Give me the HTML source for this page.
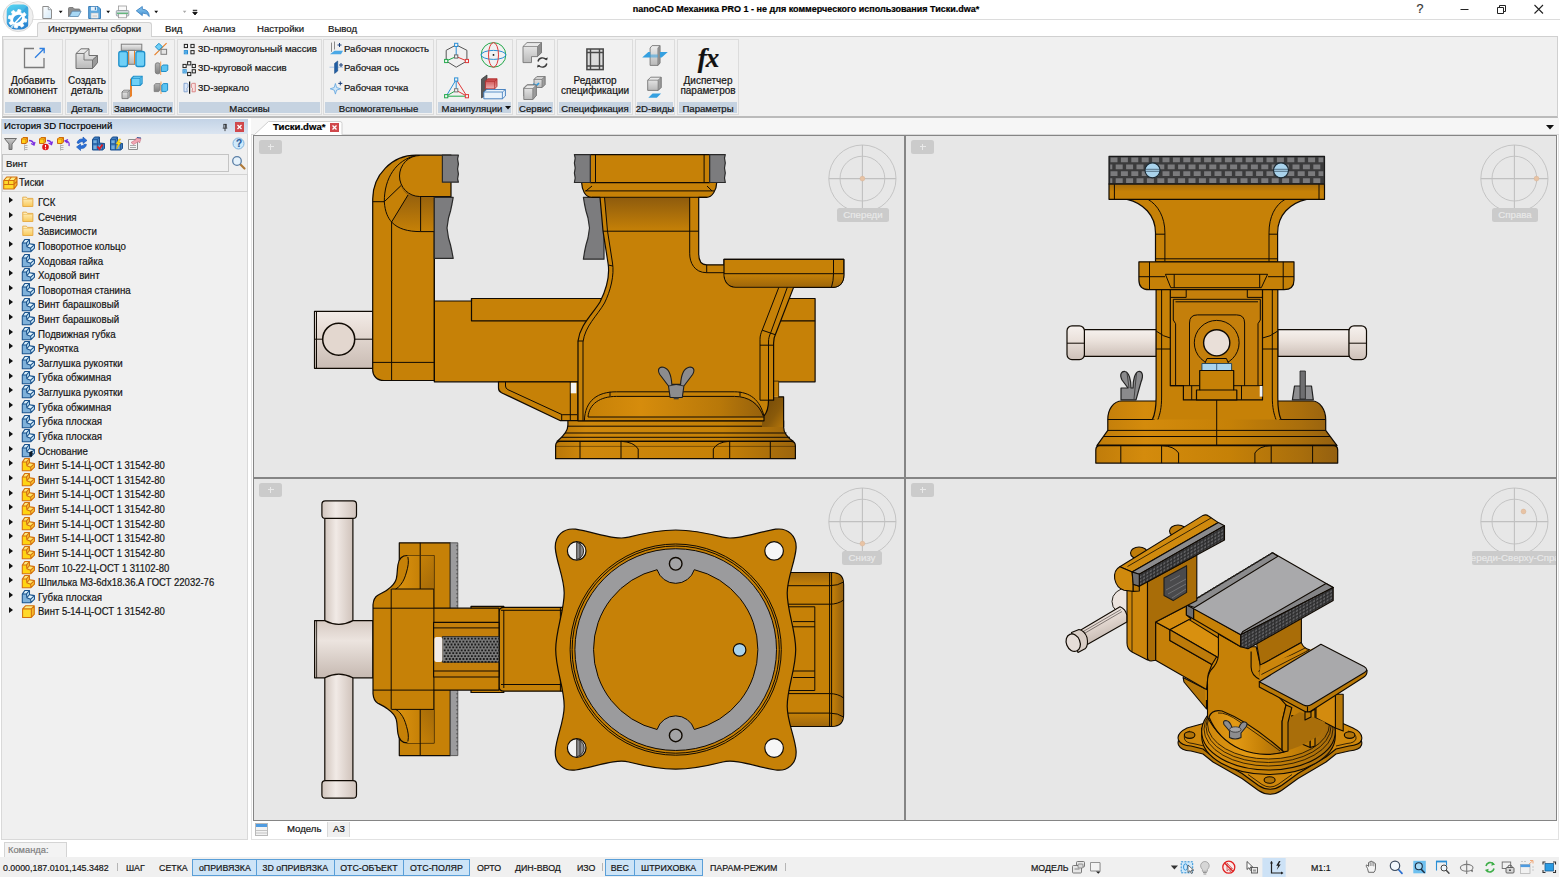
<!DOCTYPE html>
<html lang="ru">
<head>
<meta charset="utf-8">
<title>nanoCAD Механика PRO 1 - Тиски.dwa</title>
<style>
*{box-sizing:border-box;margin:0;padding:0}
html,body{width:1560px;height:877px;overflow:hidden;background:#fff}
body{position:relative;font-family:"Liberation Sans",sans-serif;font-size:9.6px;color:#151515;line-height:12px;-webkit-text-stroke:.2px}
.a{position:absolute}
.t{position:absolute;white-space:nowrap}
.tc{position:absolute;white-space:nowrap;text-align:center}
svg{position:absolute;overflow:visible}
#ribbon{left:2px;top:36px;width:1556px;height:81.5px;background:#f0f0f0;border:1px solid #d0d0d0;border-bottom:2px solid #bbbbbb}
.grp{position:absolute;top:39px;height:76px;border:1px solid #dcdcdc;background:#f1f1f1}
.grp .lab{position:absolute;left:1px;right:1px;bottom:1px;height:11px;background:#c6d3e1}
.gl{position:absolute;top:103px;height:12px;text-align:center;white-space:nowrap}
.gl span{display:inline-block}
#side{left:1px;top:119px;width:247px;height:721px;background:#f0f0f0;border:1px solid #d9d9d9}
.row{position:absolute;left:38px;white-space:nowrap;font-size:10.5px;transform:scaleX(.925);transform-origin:0 0}
.arr{position:absolute;left:9px;width:0;height:0;border-left:4.5px solid #111;border-top:3.7px solid transparent;border-bottom:3.7px solid transparent}
.sb{position:absolute;top:861.5px;white-space:nowrap;transform:scaleX(.93);transform-origin:0 0;font-size:9.5px}
.sbc{position:absolute;top:861.5px;white-space:nowrap;text-align:center;font-size:9.5px}
.sbc span{display:inline-block;transform:scaleX(.93)}
.tg{position:absolute;top:859px;height:17px;background:#cde4f7;border:1px solid #5a9fd8}
.vp{position:absolute;background:#e7e7e7;overflow:hidden}
.plus{position:absolute;width:23px;height:13.5px;background:#cbcbcb;border-radius:2.5px}
.plus:before{content:"";position:absolute;left:8.500px;top:6px;width:6px;height:1px;background:#e9e9e9}
.plus:after{content:"";position:absolute;left:11px;top:3.500px;width:1px;height:6px;background:#e9e9e9}
.vlab{position:absolute;height:13.5px;background:#cbcbcb;border-radius:2.5px;color:#e9e9e9;font-size:9.7px;text-align:center;white-space:nowrap;line-height:14.5px;overflow:hidden}
</style>
</head>
<body>
<!-- TITLE BAR -->
<div class="a" id="titlebar" style="left:0;top:0;width:1560px;height:20px;background:#fff;border-bottom:1px solid #dcdcdc"></div>
<div class="a" style="left:556px;top:3px;width:500px;color:#000;font-weight:bold;font-size:9px;text-align:center;white-space:nowrap">nanoCAD Механика PRO 1 - не для коммерческого использования Тиски.dwa*</div>
<!--QAT-->
<!-- RIBBON TABS -->
<div class="a" style="left:37px;top:22px;width:115px;height:16px;background:#f0f0f0;border:1px solid #d2d2d2;border-bottom:none;border-radius:3px 3px 0 0"></div>
<div class="a" id="ribbon"></div>
<div class="a" style="left:38px;top:36px;width:113px;height:2px;background:#f0f0f0"></div>
<div class="t" style="left:48px;top:23px">Инструменты сборки</div>
<div class="t" style="left:165px;top:23px">Вид</div>
<div class="t" style="left:203px;top:23px">Анализ</div>
<div class="t" style="left:257px;top:23px">Настройки</div>
<div class="t" style="left:328px;top:23px">Вывод</div>
<!-- app logo + quick access toolbar + window buttons -->
<svg style="left:0;top:0" width="210" height="36" viewBox="0 0 210 36">
<defs>
<linearGradient id="gLogo" x1="0" y1="0" x2=".3" y2="1"><stop offset="0" stop-color="#56d6f2"/><stop offset="1" stop-color="#2b86d2"/></linearGradient>
<clipPath id="cLogo"><circle cx="18.200" cy="16.600" r="13.600"/></clipPath>
<linearGradient id="gDoc" x1="0" y1="0" x2="1" y2="1"><stop offset="0" stop-color="#ffffff"/><stop offset="1" stop-color="#d3e8f7"/></linearGradient>
<linearGradient id="gUndo" x1="0" y1="0" x2="0" y2="1"><stop offset="0" stop-color="#8fcaf0"/><stop offset="1" stop-color="#3f8fd2"/></linearGradient>
</defs>
<rect x="0" y="19" width="4" height="1" fill="#fff"/>
<circle cx="18.200" cy="16.600" r="15" fill="#efefef" stroke="#d9d9d9" stroke-width="1"/>
<g clip-path="url(#cLogo)">
<path d="M6.700 29.500V11Q6.700 4.600 13 4.600H28.200V29.500Z" fill="url(#gLogo)"/>
<path d="M28.200 4.600L22 12L28.200 16Z" fill="#3aa8df"/>
<path d="M26.9 19.2L26.3 22.1L23.9 21.8L22.7 23.6L23.9 25.7L21.5 27.3L20.0 25.4L17.8 25.8L17.2 28.1L14.3 27.5L14.6 25.1L12.8 23.9L10.7 25.1L9.1 22.7L11.0 21.2L10.6 19.0L8.3 18.4L8.9 15.5L11.3 15.8L12.5 14.0L11.3 11.9L13.7 10.3L15.2 12.2L17.4 11.8L18.0 9.5L20.9 10.1L20.6 12.5L22.4 13.7L24.5 12.5L26.1 14.9L24.2 16.4L24.6 18.6Z" fill="#fff" stroke="#fff" stroke-width=".8" stroke-linejoin="round"/>
<ellipse cx="17.600" cy="18.800" rx="5" ry="3.600" transform="rotate(-35 17.600 18.800)" fill="#3a9fe0"/>
<path d="M10 29.500l4.500-6M14.500 23.500l7-7.500" stroke="#fff" stroke-width="1.500" stroke-linecap="round"/>
<path d="M10.500 28.800l3.500-4.500" stroke="#5ab4e8" stroke-width=".7"/>
</g>
<!-- new -->
<path d="M42.800 6.500h5.500l3.200 3.200v8.800h-8.700z" fill="url(#gDoc)" stroke="#8c8c8c" stroke-width="1"/><path d="M48.300 6.500v3.200h3.200" fill="#e9f3fb" stroke="#8c8c8c" stroke-width=".8"/>
<path d="M58.800 10.800h3.800l-1.900 2.400z" fill="#111"/>
<!-- open -->
<path d="M68.500 16.500v-8q0-1 1-1h3.500l1.500 1.500h4.500q1 0 1 1v1.500h-8.500l-2.500 5z" fill="#8d8d8d" stroke="#6e6e6e" stroke-width=".8"/>
<path d="M69.500 16.500l2.800-5.300h8.800l-2.800 5.300z" fill="#a8d8f5" stroke="#5c88ad" stroke-width=".8"/>
<!-- save -->
<path d="M88.700 6.500h9.300l2.500 2.500v9.500h-11.800z" fill="#5da8de" stroke="#3b7db8" stroke-width="1"/><rect x="91" y="6.800" width="6" height="3.800" fill="#e8f2fa"/><rect x="94.800" y="7.300" width="1.300" height="2.600" fill="#3b7db8"/><rect x="91" y="13" width="7.300" height="5.200" fill="#eeeeee" stroke="#9fb4c6" stroke-width=".5"/><path d="M92.500 16h4.500" stroke="#b9b9b9" stroke-width=".8"/>
<path d="M106.300 10.800h3.800l-1.900 2.400z" fill="#111"/>
<!-- print -->
<rect x="118.500" y="6" width="8" height="5" fill="#fafafa" stroke="#9a9a9a" stroke-width=".8"/><rect x="116.300" y="10.500" width="12.500" height="5.500" rx="1" fill="#d2d8de" stroke="#8e959c" stroke-width=".8"/><rect x="118.500" y="13.800" width="8" height="4" fill="#fafafa" stroke="#9a9a9a" stroke-width=".8"/><path d="M117 13.300h11" stroke="#5fb87a" stroke-width="1.300"/>
<!-- undo -->
<path d="M136.300 10.800l6-4.300v2.700q6.500.3 7 7.300q-2.300-3.600-7-3.400v2.500z" fill="url(#gUndo)" stroke="#2f78bd" stroke-width=".8" stroke-linejoin="round"/>
<path d="M154.300 10.800h3.800l-1.900 2.400z" fill="#111"/>
<path d="M182.800 10.800h3.600l-1.800 2.300z" fill="#a8a8a8"/>
<path d="M192.800 10.300h4.400M192.800 12.300h4.400l-2.200 2.600z" fill="#111" stroke="#111" stroke-width="1"/>
</svg>
<div class="a" style="left:1415px;top:2px;width:10px;text-align:center;font-size:12.5px;color:#333;line-height:14px">?</div>
<svg style="left:1455px;top:0" width="100" height="20" viewBox="1455 0 100 20"><path d="M1460.500 9.500h8" stroke="#222" stroke-width="1"/><path d="M1497.500 7.500h6v6h-6zM1499.500 7.500v-2h6v6h-2" fill="none" stroke="#222" stroke-width="1"/><path d="M1534.500 5l8.500 8.500M1543 5l-8.500 8.500" stroke="#222" stroke-width="1.100"/></svg>
<!-- ribbon groups -->
<div class="grp" style="left:3px;width:60px"><div class="lab"></div></div>
<div class="grp" style="left:65px;width:44px"><div class="lab"></div></div>
<div class="grp" style="left:111px;width:64px"><div class="lab"></div></div>
<div class="grp" style="left:177px;width:145px"><div class="lab"></div></div>
<div class="grp" style="left:323px;width:111px"><div class="lab"></div></div>
<div class="grp" style="left:436px;width:77px"><div class="lab"></div></div>
<div class="grp" style="left:516px;width:39px"><div class="lab"></div></div>
<div class="grp" style="left:557px;width:76px"><div class="lab"></div></div>
<div class="grp" style="left:635px;width:40px"><div class="lab"></div></div>
<div class="grp" style="left:677px;width:62px"><div class="lab"></div></div>
<div class="gl" style="left:3px;width:60px"><span>Вставка</span></div>
<div class="gl" style="left:65px;width:44px"><span>Деталь</span></div>
<div class="gl" style="left:103px;width:80px"><span>Зависимости</span></div>
<div class="gl" style="left:177px;width:145px"><span>Массивы</span></div>
<div class="gl" style="left:323px;width:111px"><span>Вспомогательные</span></div>
<div class="gl" style="left:430px;width:84px"><span>Манипуляции</span></div>
<div class="gl" style="left:516px;width:39px"><span>Сервис</span></div>
<div class="gl" style="left:552px;width:86px"><span>Спецификация</span></div>
<div class="gl" style="left:630px;width:50px"><span>2D-виды</span></div>
<div class="gl" style="left:677px;width:62px"><span>Параметры</span></div>
<!-- big button labels -->
<div class="tc" style="left:3px;top:75px;width:60px;font-size:10px">Добавить</div>
<div class="tc" style="left:3px;top:85px;width:60px;font-size:10px">компонент</div>
<div class="tc" style="left:65px;top:75px;width:44px;font-size:10px">Создать</div>
<div class="tc" style="left:65px;top:85px;width:44px;font-size:10px">деталь</div>
<div class="tc" style="left:557px;top:75px;width:76px;font-size:10px">Редактор</div>
<div class="tc" style="left:555px;top:85px;width:80px;font-size:10px">спецификации</div>
<div class="tc" style="left:677px;top:75px;width:62px;font-size:10px">Диспетчер</div>
<div class="tc" style="left:677px;top:85px;width:62px;font-size:10px">параметров</div>
<!-- small button labels -->
<div class="t" style="left:198px;top:43px">3D-прямоугольный массив</div>
<div class="t" style="left:198px;top:62px">3D-круговой массив</div>
<div class="t" style="left:198px;top:82px">3D-зеркало</div>
<div class="t" style="left:344px;top:43px">Рабочая плоскость</div>
<div class="t" style="left:344px;top:62px">Рабочая ось</div>
<div class="t" style="left:344px;top:82px">Рабочая точка</div>
<!-- ribbon icons -->
<svg style="left:0;top:36px" width="760" height="80" viewBox="0 36 760 80">
<defs>
<linearGradient id="gGr" x1="0" y1="0" x2="0" y2="1"><stop offset="0" stop-color="#efefef"/><stop offset="1" stop-color="#b9b9b9"/></linearGradient>
<linearGradient id="gGrD" x1="0" y1="0" x2="0" y2="1"><stop offset="0" stop-color="#b5b5b5"/><stop offset="1" stop-color="#808080"/></linearGradient>
<linearGradient id="gRed" x1="0" y1="0" x2="0" y2="1"><stop offset="0" stop-color="#c84040"/><stop offset="1" stop-color="#f2b0b0"/></linearGradient>
<g id="sq"><rect x="-1.600" y="-1.600" width="3.200" height="3.200" fill="#f4f4f4" stroke-width="1"/></g>
<g id="plus"><path d="M-2 0H2M0 -2V2" stroke="#1b3f7a" stroke-width="1" fill="none"/></g>
<g id="gcube"><path d="M0 3l3-3h8v8l-3 3h-8z" fill="url(#gGr)" stroke="#777" stroke-width=".9" stroke-linejoin="round"/><path d="M0 3l3-3h8l-3 3z" fill="#cfcfcf" stroke="#777" stroke-width=".7"/><path d="M8 3l3-3v8l-3 3z" fill="#9c9c9c" stroke="#777" stroke-width=".7"/></g>
</defs>
<!-- add component -->
<path d="M34 48.500H24.500V67.500H44V58" fill="none" stroke="#7a7a7a" stroke-width="1.300"/>
<path d="M35 57.700L44 48.700M39.500 48.500H44.200V53.200" fill="none" stroke="#2f7fe0" stroke-width="1.300"/>
<!-- create detail -->
<path d="M76 53.500l5-4.700h8v6.700h8.500v7l-5 6h-16.500z" fill="url(#gGr)" stroke="#6f6f6f" stroke-width="1" stroke-linejoin="round"/>
<path d="M76 53.500h8v6.500h8.500v8.500M84 53.500l5-4.700M92.500 60l5-4.500" fill="none" stroke="#6f6f6f" stroke-width=".9"/>
<path d="M92.500 60l5-4.500v7l-5 6z" fill="#9a9a9a" stroke="#6f6f6f" stroke-width=".8"/>
<!-- constraints big 1 -->
<rect x="121.300" y="44.200" width="20.500" height="6.200" fill="url(#gGr)" stroke="#7d7d7d" stroke-width="1"/>
<rect x="128.600" y="50.400" width="5.900" height="13.900" fill="url(#gGr)" stroke="#7d7d7d" stroke-width="1"/>
<path d="M128.600 51V64M134.500 51V64" stroke="#e8802a" stroke-width="1" fill="none"/>
<rect x="118.800" y="51.500" width="8.700" height="15" rx="2" fill="#6fd0f7" stroke="#1f8fc9" stroke-width="1.300"/>
<rect x="135.900" y="51.500" width="8.800" height="15" rx="2" fill="#6fd0f7" stroke="#1f8fc9" stroke-width="1.300"/>
<!-- constraints big 2 -->
<path d="M122 92l1.800-1.800h6v6.600l-1.800 1.800h-6z" fill="url(#gGr)" stroke="#777" stroke-width=".9"/><path d="M122 92h6v6.600M128 92l1.800-1.800" fill="none" stroke="#777" stroke-width=".8"/>
<path d="M130 79V97.500l2-1.500V78z" fill="#e8802a"/>
<path d="M131.500 78.300l2-2h8.600v7.200l-2 2h-8.600z" fill="#6fd0f7" stroke="#1f8fc9" stroke-width="1.100"/><path d="M131.500 78.300h8.600v7.200M140.100 78.300l2-2" fill="none" stroke="#1f8fc9" stroke-width=".9"/>
<!-- constraints small -->
<path d="M154.500 55.200L166.600 43.100" stroke="#e8802a" stroke-width="1.200"/>
<path d="M158.900 43.300l3.500 3.500-3.500 3.500-3.500-3.500z" fill="#6fd0f7" stroke="#1f8fc9" stroke-width="1"/>
<rect x="161" y="49.300" width="5.600" height="5" fill="#e4e4e4" stroke="#7d7d7d" stroke-width="1"/>
<rect x="155.300" y="62.800" width="4.800" height="11" rx="2" fill="url(#gGrD)" stroke="#707070" stroke-width=".8"/>
<path d="M160.700 61.500V75" stroke="#f0a05a" stroke-width="1"/>
<path d="M161.300 66.500l1.500-1.500h5v5l-1.500 1.500h-5z" fill="#5cc4f2" stroke="#1f8fc9" stroke-width="1"/>
<path d="M154.200 85l1.500-1.400h4.500v6.500l-1.500 1.500h-4.500z" fill="url(#gGrD)" stroke="#777" stroke-width=".8"/>
<path d="M161 81.500V94" stroke="#f0a05a" stroke-width="1"/>
<path d="M161.800 85l1.500-1.400h4.300v6.500l-1.500 1.500h-4.300z" fill="#5cc4f2" stroke="#1f8fc9" stroke-width="1"/>
<!-- arrays -->
<g stroke="#222"><use href="#sq" x="185.900" y="46"/><use href="#sq" x="192.500" y="46"/><use href="#sq" x="192.500" y="52.200"/></g>
<g stroke="#2a8fd6"><use href="#sq" x="185.900" y="52.200"/></g><rect x="184.800" y="51.100" width="2.200" height="2.200" fill="#4aa8e6"/>
<g stroke="#222"><use href="#sq" x="189.200" y="63.300"/><use href="#sq" x="193.800" y="66"/><use href="#sq" x="193.800" y="71.300"/><use href="#sq" x="189.200" y="74"/><use href="#sq" x="184.600" y="66"/></g>
<g stroke="#2a8fd6"><use href="#sq" x="184.600" y="71.300"/></g><rect x="183.500" y="70.200" width="2.200" height="2.200" fill="#4aa8e6"/>
<path d="M189.600 81.400V93.800" stroke="#111" stroke-width="1.200"/>
<path d="M184 83.300h2.500q1.500 0 1.500 1.500v2.500l-1.200 1 .5 3.500h-3.300z" fill="#dbe7f7" stroke="#7f9fce" stroke-width=".9"/>
<path d="M195.300 83.300h-2.500q-1.500 0-1.500 1.500v2.500l1.200 1-.5 3.500h3.300z" fill="#f9e1e1" stroke="#d87f7f" stroke-width=".9"/>
<!-- work plane/axis/point -->
<path d="M331.500 42.600V51.800M334.500 41.500V49.500" stroke="#8a8a8a" stroke-width="1" fill="none"/>
<path d="M330 54.200l4.500-3.400h8.500l-2 3.400z" fill="#4aa8e6"/>
<use href="#plus" x="339.500" y="45"/>
<path d="M329.500 67.200H334M338 67.200H343" stroke="#a9c6e6" stroke-width="1"/>
<path d="M334.600 63.400l3.100-2.400v10l-3.100 2.400z" fill="#1f5fa8" stroke="#17487f" stroke-width=".6"/>
<use href="#plus" x="341" y="65"/>
<path d="M335.400 83.500l1.200 4 4 1.300-4 1.300-1.200 4-1.200-4-4-1.300 4-1.300z" fill="#cfe6f8" stroke="#5ea3de" stroke-width=".8"/>
<use href="#plus" x="340.300" y="83.400"/>
<!-- manipulations -->
<path d="M456.200 44.900L466.900 50.300V61L456.200 67.200L446.200 61V50.300Z" fill="none" stroke="#555" stroke-width="1"/>
<path d="M456.200 56.500V45" stroke="#2a8fd6" stroke-width="1"/><path d="M456.200 56.500L446.200 61" stroke="#21a84a" stroke-width="1"/><path d="M456.200 56.500L466.900 61" stroke="#e03a3a" stroke-width="1"/>
<g stroke="#2a8fd6"><use href="#sq" x="456.200" y="44.900"/></g><g stroke="#21a84a"><use href="#sq" x="446.200" y="61"/></g><g stroke="#e03a3a"><use href="#sq" x="466.900" y="61"/></g><g stroke="#666"><use href="#sq" x="456.200" y="56.500"/></g>
<circle cx="493.500" cy="54.900" r="12.300" fill="none" stroke="#21a84a" stroke-width="1"/>
<ellipse cx="493.500" cy="54.900" rx="12.300" ry="4.500" fill="none" stroke="#2a8fd6" stroke-width="1"/>
<ellipse cx="493.500" cy="54.900" rx="5" ry="12.300" fill="none" stroke="#e03a3a" stroke-width="1"/>
<circle cx="493.500" cy="54.900" r=".9" fill="#111"/>
<path d="M456.200 79.500L446.200 96.200M456.200 79.500V90.300" stroke="#2a8fd6" stroke-width="1" fill="none"/>
<path d="M456.200 79.500L466.900 96.200M466.900 96.200L456.200 90.300" stroke="#e03a3a" stroke-width="1" fill="none"/>
<path d="M446.200 96.200H466.900M446.200 96.200L456.200 90.300" stroke="#21a84a" stroke-width="1" fill="none"/>
<g stroke="#2a8fd6"><use href="#sq" x="456.200" y="79.500"/></g><g stroke="#21a84a"><use href="#sq" x="446.200" y="96.200"/></g><g stroke="#e03a3a"><use href="#sq" x="466.900" y="96.200"/></g><g stroke="#777"><use href="#sq" x="456.200" y="90.300"/></g>
<path d="M481.500 79l5.500-4v19l-5.500 4z" fill="#5a5a5a" stroke="#333" stroke-width=".7"/>
<path d="M485.400 81.300l2.300-2.500h9.300v7.500l-2.300 2.500h-9.300z" fill="url(#gRed)" stroke="#b03030" stroke-width=".9"/><path d="M485.400 81.300h9.300v7.500M494.700 81.300l2.300-2.500" fill="none" stroke="#b03030" stroke-width=".8"/>
<path d="M483.800 92l3-2.500h18.600v6.500l-3 2.800h-18.600z" fill="#eaf3fb" stroke="#3b78bb" stroke-width=".9"/><path d="M483.800 92h18.600v6.800M502.400 92l3-2.500" fill="none" stroke="#3b78bb" stroke-width=".8"/>
<!-- service -->
<path d="M523 46.500l4-3.900h14.500v10l-4 4h-6v6h-8.500z" fill="url(#gGr)" stroke="#777" stroke-width=".9" stroke-linejoin="round"/>
<path d="M537.500 46.500l4-3.900v10l-4 4z" fill="#8e8e8e" stroke="#777" stroke-width=".7"/><path d="M523 46.500h14.500" stroke="#777" stroke-width=".7" fill="none"/>
<path d="M538 61.500a4.500 4.500 0 0 1 8-1.800M546.800 63.500a4.500 4.500 0 0 1-8 1.800" fill="none" stroke="#3a3a3a" stroke-width="1.400"/><path d="M544.500 58.500l2.500 2 .8-3zM540.300 66.500l-2.500-2-.8 3z" fill="#3a3a3a"/>
<use href="#gcube" x="534" y="76.500"/><path d="M533 84l3.500 1.500 2.500-2.500" stroke="#2a9be0" stroke-width="1.600" fill="none"/><use href="#gcube" x="523.800" y="85" transform="translate(0 0)"/>
<path d="M523.800 88.500l3.500-3.500h9v10.500l-3.500 4h-9z" fill="url(#gGr)" stroke="#777" stroke-width=".9"/><path d="M532.800 88.500l3.500-3.500v10.500l-3.500 4z" fill="#9c9c9c" stroke="#777" stroke-width=".7"/><path d="M523.800 88.500h9" stroke="#777" stroke-width=".7"/>
<!-- spec table -->
<rect x="586.900" y="49" width="16.300" height="20.600" fill="#dcdcdc" stroke="#474747" stroke-width="1.500"/>
<path d="M590.500 49V69.600M599.500 49V69.600M586.900 52.500H603.200M586.900 66H603.200" stroke="#474747" stroke-width="1.400" fill="none"/>
<!-- 2d views -->
<path d="M650.100 48l2-2.400h7.800v17.500l-2 2.300h-7.800z" fill="url(#gGr)" stroke="#777" stroke-width=".9"/><path d="M657.900 48l2-2.400v17.500l-2 2.300z" fill="#9c9c9c" stroke="#777" stroke-width=".7"/>
<path d="M642.200 57.500l6.100-5.500h2v5.500zM659.900 52h7.900l-6.100 5.500h-1.800z" fill="#35a0e0"/>
<path d="M650.100 54.500h7.800v3h-7.800z" fill="#35a0e0" opacity=".55"/>
<path d="M647.700 80.200l3-3h10.400v10.200l-3 3h-10.400z" fill="url(#gGr)" stroke="#777" stroke-width=".9"/><path d="M658.100 80.200l3-3v10.200l-3 3z" fill="#9c9c9c" stroke="#777" stroke-width=".7"/><path d="M647.700 80.200h10.400" stroke="#777" stroke-width=".7"/>
<path d="M648.300 97.700l4.300-4.300h8.500l-4.300 4.300z" fill="#35a0e0"/>
</svg>
<div class="a" style="left:690px;top:43px;width:36px;text-align:center;font-family:'Liberation Serif',serif;font-style:italic;font-weight:bold;font-size:27px;line-height:30px;color:#111;letter-spacing:-1px">fx</div>
<svg style="left:505px;top:106px" width="6" height="4" viewBox="0 0 6 4"><path d="M0 0h6l-3 3.500z" fill="#111"/></svg>
<!-- side panel -->
<svg width="0" height="0" style="left:0;top:0"><defs>
<linearGradient id="gfold" x1="0" y1="0" x2="0" y2="1"><stop offset="0" stop-color="#fff3c8"/><stop offset="1" stop-color="#f9c95a"/></linearGradient>
<g id="ic-f"><path d="M0.800 2.200h3.700l1 1.300h5.700v8.300h-10.400z" fill="url(#gfold)" stroke="#e3a53c" stroke-width=".9"/><path d="M0.800 4.600h10.400" stroke="#efc060" stroke-width=".7" fill="none"/></g>
<g id="ic-b"><path d="M0.300 4.200L4.600 4L5 8L8.900 9.500L9.200 13.100L0.300 13.100Z" fill="#7fb1da"/><path d="M0.300 4.200L2.800 .6L7.700 .5L4.600 4Z" fill="#d9effb"/><path d="M4.600 4L7.700 .5L7.700 4.600L5 8Z" fill="#b7dcf2"/><path d="M5 8L7.700 4.600L8.600 5L12.800 5.800L8.900 9.500Z" fill="#e4f5fd"/><path d="M8.900 9.500L12.800 5.800L12.800 9.500L9.200 13.100Z" fill="#d3ecf9"/><path d="M0.300 4.200L2.800 .6L7.700 .5L7.700 4.600L8.600 5L12.800 5.800L12.800 9.500L9.200 13.100L0.300 13.100ZM0.300 4.200L4.600 4L5 8L8.900 9.500L9.200 13.100M4.600 4L7.700 .5M5 8L7.700 4.600M8.900 9.500L12.800 5.800" fill="none" stroke="#1a528c" stroke-width="1.100" stroke-linejoin="round"/></g>
<g id="ic-y"><path d="M0.300 4.200L4.600 4L5 8L8.900 9.500L9.200 13.100L0.300 13.100Z" fill="#ffd413"/><path d="M0.300 4.200L2.800 .6L7.700 .5L4.600 4Z" fill="#ffe97a"/><path d="M4.600 4L7.700 .5L7.700 4.600L5 8Z" fill="#f9bd2c"/><path d="M5 8L7.700 4.600L8.600 5L12.800 5.800L8.900 9.500Z" fill="#ffe66a"/><path d="M8.900 9.500L12.800 5.800L12.800 9.500L9.200 13.100Z" fill="#fbc530"/><path d="M0.300 4.200L2.800 .6L7.700 .5L7.700 4.600L8.600 5L12.800 5.800L12.800 9.500L9.200 13.100L0.300 13.100ZM0.300 4.200L4.600 4L5 8L8.900 9.500L9.200 13.100M4.600 4L7.700 .5M5 8L7.700 4.600M8.900 9.500L12.800 5.800" fill="none" stroke="#d2700f" stroke-width="1.100" stroke-linejoin="round"/></g>
<g id="ic-c"><path d="M0.600 4l3-3.200h9v8.700l-3 3.300h-9z" fill="#ffd92b"/><path d="M0.600 4l3-3.200h9l-3 3.200z" fill="#ffec85"/><path d="M9.600 4l3-3.200v8.700l-3 3.300z" fill="#f7b92a"/><path d="M0.600 4l3-3.200h9v8.700l-3 3.300h-9zM0.600 4h9v8.800M9.600 4l3-3.200" fill="none" stroke="#d2700f" stroke-width="1.100" stroke-linejoin="round"/></g>
<g id="ic-anchor"><path d="M7.500 8.500l2.500-1.500 1 2.500-1 3.500-2.500-.5z" fill="#0d1a2a"/></g>
</defs></svg>
<div class="a" id="side"></div>
<div class="a" style="left:2px;top:119px;width:246px;height:15px;background:linear-gradient(#c3d3e6,#dbe5f1)"></div>
<div class="t" style="left:4px;top:119.500px;color:#000">История 3D Построений</div>
<svg style="left:222px;top:123.500px" width="6" height="7.500" viewBox="0 0 8 10"><path d="M2 0.500h4M2.500 .5v4.500M5.500 .5v4.500M5 .5v4.500M1 5.500h6M4 5.500v4" stroke="#111" stroke-width="1" fill="none"/></svg>
<div class="a" style="left:235px;top:122px;width:9px;height:10px;background:#d0484c"></div>
<svg style="left:235px;top:122px" width="9" height="10" viewBox="0 0 9 10"><path d="M2.500 3l4 4M6.500 3l-4 4" stroke="#fff" stroke-width="1.300"/></svg>
<!-- side toolbar -->
<svg style="left:0;top:134px" width="250" height="20" viewBox="0 134 250 20">
<defs><linearGradient id="gfun" x1="0" y1="0" x2="0" y2="1"><stop offset="0" stop-color="#c9c9c9"/><stop offset="1" stop-color="#8a8a8a"/></linearGradient>
<g id="tb-cube"><path d="M0 1.500l1.500-1.500h4.500v4.500l-1.500 1.500h-4.500z" fill="#ffd21a" stroke="#d06c0c" stroke-width="1"/><path d="M0 1.500h4.500v4.500M4.500 1.500l1.500-1.500" fill="none" stroke="#d06c0c" stroke-width=".8"/></g>
<g id="tb-lines"><path d="M0 0v6M0 1h3M0 3h3M0 5h3" stroke="#b5b5b5" stroke-width="1" fill="none"/></g>
<g id="tb-blue"><path d="M0 3l2-2.500h5v6l5 .5v5l-2 1.500h-10z" fill="#3f7fc0" stroke="#1b4f8f" stroke-width="1" stroke-linejoin="round"/><path d="M0 3h5v4.500h5v6M5 3l2-2.500M0 7.500h5M5 7.500v6M10 7.500l2-.5" fill="none" stroke="#1b4f8f" stroke-width=".7"/><path d="M1 4h3v2.500h-3zM1 9h3v3.500h-3zM6 9h3v3.500h-3z" fill="#8fc0e8" opacity=".7"/></g>
</defs>
<path d="M4.500 138.500h12l-4.500 5.500v5.500h-3v-5.500z" fill="url(#gfun)" stroke="#6e6e6e" stroke-width="1" stroke-linejoin="round"/>
<use href="#tb-cube" x="21.500" y="137.500"/><use href="#tb-lines" x="24.500" y="144.500"/><path d="M29 140.500q4 0 5 4m-3-1l3 1.500 1-3" fill="none" stroke="#7b2fe0" stroke-width="1.300"/>
<use href="#tb-cube" x="39.500" y="137.500"/><path d="M47 140.500q4 0 4.500 3.500m-3-1l3 1.500 1-3" fill="none" stroke="#7b2fe0" stroke-width="1.300"/><circle cx="45.500" cy="147" r="3.300" fill="#e01818"/><path d="M45.500 145v2.300M45.500 148.300v.9" stroke="#fff" stroke-width="1.100"/>
<use href="#tb-cube" x="57.500" y="137.500"/><use href="#tb-lines" x="60.500" y="144.500"/><path d="M69 146q1-5-3.500-5m2.500-1.500l-3 1.500 2.500 2" fill="none" stroke="#7b2fe0" stroke-width="1.300"/>
<path d="M77 143q1-4.500 6-4v-2l4 3.500-4 3v-2q-3 0-4 2z" fill="#2a6fd6" stroke="#1553b0" stroke-width=".6"/><path d="M86.500 144.500q-1 4.500-6 4v2l-4-3.500 4-3v2q3 0 4-2z" fill="#2a6fd6" stroke="#1553b0" stroke-width=".6"/>
<use href="#tb-blue" x="92.500" y="136.500"/><path d="M97.500 146.500l2 2.500 3-4.500" fill="none" stroke="#e01b24" stroke-width="1.800"/>
<use href="#tb-blue" x="110.500" y="136.500"/><path d="M119 139l-3 5h2l-1.500 5 4.500-6.500h-2.300l2-3.500z" fill="#ffe11a" stroke="#e0a800" stroke-width=".5"/>
<path d="M128.500 139.500h9v10h-9z" fill="#f4f4f4" stroke="#8c8c8c" stroke-width="1"/><path d="M130 145.500h6M130 147.500h6" stroke="#a8a8a8" stroke-width="1"/><path d="M131 142.500l5-3v-1.500l5 .5-1.500 4.500-1-1.500-5 3z" fill="#f2a6b2" stroke="#c86a7c" stroke-width=".6"/><path d="M137 137.500l4 .5" stroke="#3a5a9a" stroke-width="1"/>
<circle cx="238.500" cy="143.500" r="5.500" fill="#cfe9fb" stroke="#7fb2dc" stroke-width="1"/>
</svg>
<div class="a" style="left:235px;top:138px;width:8px;text-align:center;font-weight:bold;font-size:10px;color:#2b5e9e">?</div>
<div class="a" style="left:2px;top:154px;width:227px;height:18px;background:#f0f0f0;border:1px solid #c4c4c4"></div>
<svg style="left:230px;top:154px" width="18" height="18" viewBox="230 154 18 18"><path d="M240 164l4.500 4.500" stroke="#b07a3a" stroke-width="2.200" stroke-linecap="round"/><circle cx="237" cy="161" r="4.300" fill="#e6f2fb" stroke="#5b7fa6" stroke-width="1.300"/></svg>
<div class="t" style="left:6px;top:157.500px">Винт</div>
<div class="a" style="left:2px;top:174px;width:246px;height:18px;background:#f0f0f0;border:1px solid #d3d3d3"></div>
<svg style="left:3px;top:176px" width="15" height="14" viewBox="0 0 15 14"><path d="M0.700 4.500l3-3.500h10.300v8l-3 4h-10.300z" fill="#ffd92b"/><path d="M0.700 4.500l3-3.500h10.300l-3 3.500z" fill="#ffec85"/><path d="M11 4.500l3-3.500v8l-3 4z" fill="#f7b92a"/><path d="M0.700 4.500l3-3.500h10.300v8l-3 4h-10.300zM0.700 4.500h10.300v8.500M11 4.500l3-3.500M5.500 4.500l3-3.500M0.700 8.500h10.300l3-3.500M5.500 4.500v4" fill="none" stroke="#d2700f" stroke-width="1.100" stroke-linejoin="round"/></svg>
<div class="t" style="left:19px;top:177px;font-size:10.200px;transform:scaleX(.93);transform-origin:0 0">Тиски</div>

<div class="arr" style="top:197.1px"></div>
<svg style="left:22px;top:195.2px" width="14" height="14" viewBox="0 0 14.400 14.400"><use href="#ic-f"/></svg>
<div class="row" style="top:196.0px">ГСК</div>
<div class="arr" style="top:211.7px"></div>
<svg style="left:22px;top:209.8px" width="14" height="14" viewBox="0 0 14.400 14.400"><use href="#ic-f"/></svg>
<div class="row" style="top:210.6px">Сечения</div>
<div class="arr" style="top:226.3px"></div>
<svg style="left:22px;top:224.4px" width="14" height="14" viewBox="0 0 14.400 14.400"><use href="#ic-f"/></svg>
<div class="row" style="top:225.2px">Зависимости</div>
<div class="arr" style="top:241.0px"></div>
<svg style="left:22px;top:239.1px" width="14" height="14" viewBox="0 0 14.400 14.400"><use href="#ic-b"/></svg>
<div class="row" style="top:239.9px">Поворотное кольцо</div>
<div class="arr" style="top:255.6px"></div>
<svg style="left:22px;top:253.7px" width="14" height="14" viewBox="0 0 14.400 14.400"><use href="#ic-b"/></svg>
<div class="row" style="top:254.5px">Ходовая гайка</div>
<div class="arr" style="top:270.2px"></div>
<svg style="left:22px;top:268.3px" width="14" height="14" viewBox="0 0 14.400 14.400"><use href="#ic-b"/></svg>
<div class="row" style="top:269.1px">Ходовой винт</div>
<div class="arr" style="top:284.8px"></div>
<svg style="left:22px;top:282.9px" width="14" height="14" viewBox="0 0 14.400 14.400"><use href="#ic-b"/></svg>
<div class="row" style="top:283.7px">Поворотная станина</div>
<div class="arr" style="top:299.4px"></div>
<svg style="left:22px;top:297.5px" width="14" height="14" viewBox="0 0 14.400 14.400"><use href="#ic-b"/></svg>
<div class="row" style="top:298.3px">Винт барашковый</div>
<div class="arr" style="top:314.1px"></div>
<svg style="left:22px;top:312.2px" width="14" height="14" viewBox="0 0 14.400 14.400"><use href="#ic-b"/></svg>
<div class="row" style="top:313.0px">Винт барашковый</div>
<div class="arr" style="top:328.7px"></div>
<svg style="left:22px;top:326.8px" width="14" height="14" viewBox="0 0 14.400 14.400"><use href="#ic-b"/></svg>
<div class="row" style="top:327.6px">Подвижная губка</div>
<div class="arr" style="top:343.3px"></div>
<svg style="left:22px;top:341.4px" width="14" height="14" viewBox="0 0 14.400 14.400"><use href="#ic-b"/></svg>
<div class="row" style="top:342.2px">Рукоятка</div>
<div class="arr" style="top:357.9px"></div>
<svg style="left:22px;top:356.0px" width="14" height="14" viewBox="0 0 14.400 14.400"><use href="#ic-b"/></svg>
<div class="row" style="top:356.8px">Заглушка рукоятки</div>
<div class="arr" style="top:372.5px"></div>
<svg style="left:22px;top:370.6px" width="14" height="14" viewBox="0 0 14.400 14.400"><use href="#ic-b"/></svg>
<div class="row" style="top:371.4px">Губка обжимная</div>
<div class="arr" style="top:387.2px"></div>
<svg style="left:22px;top:385.3px" width="14" height="14" viewBox="0 0 14.400 14.400"><use href="#ic-b"/></svg>
<div class="row" style="top:386.1px">Заглушка рукоятки</div>
<div class="arr" style="top:401.8px"></div>
<svg style="left:22px;top:399.9px" width="14" height="14" viewBox="0 0 14.400 14.400"><use href="#ic-b"/></svg>
<div class="row" style="top:400.7px">Губка обжимная</div>
<div class="arr" style="top:416.4px"></div>
<svg style="left:22px;top:414.5px" width="14" height="14" viewBox="0 0 14.400 14.400"><use href="#ic-b"/></svg>
<div class="row" style="top:415.3px">Губка плоская</div>
<div class="arr" style="top:431.0px"></div>
<svg style="left:22px;top:429.1px" width="14" height="14" viewBox="0 0 14.400 14.400"><use href="#ic-b"/></svg>
<div class="row" style="top:429.9px">Губка плоская</div>
<div class="arr" style="top:445.6px"></div>
<svg style="left:22px;top:443.7px" width="14" height="14" viewBox="0 0 14.400 14.400"><use href="#ic-b"/><use href="#ic-anchor"/></svg>
<div class="row" style="top:444.5px">Основание</div>
<div class="arr" style="top:460.3px"></div>
<svg style="left:22px;top:458.4px" width="14" height="14" viewBox="0 0 14.400 14.400"><use href="#ic-y"/></svg>
<div class="row" style="top:459.2px;transform:scaleX(.905)">Винт 5-14-Ц-ОСТ 1 31542-80</div>
<div class="arr" style="top:474.9px"></div>
<svg style="left:22px;top:473.0px" width="14" height="14" viewBox="0 0 14.400 14.400"><use href="#ic-y"/></svg>
<div class="row" style="top:473.8px;transform:scaleX(.905)">Винт 5-14-Ц-ОСТ 1 31542-80</div>
<div class="arr" style="top:489.5px"></div>
<svg style="left:22px;top:487.6px" width="14" height="14" viewBox="0 0 14.400 14.400"><use href="#ic-y"/></svg>
<div class="row" style="top:488.4px;transform:scaleX(.905)">Винт 5-14-Ц-ОСТ 1 31542-80</div>
<div class="arr" style="top:504.1px"></div>
<svg style="left:22px;top:502.2px" width="14" height="14" viewBox="0 0 14.400 14.400"><use href="#ic-y"/></svg>
<div class="row" style="top:503.0px;transform:scaleX(.905)">Винт 5-14-Ц-ОСТ 1 31542-80</div>
<div class="arr" style="top:518.7px"></div>
<svg style="left:22px;top:516.8px" width="14" height="14" viewBox="0 0 14.400 14.400"><use href="#ic-y"/></svg>
<div class="row" style="top:517.6px;transform:scaleX(.905)">Винт 5-14-Ц-ОСТ 1 31542-80</div>
<div class="arr" style="top:533.4px"></div>
<svg style="left:22px;top:531.5px" width="14" height="14" viewBox="0 0 14.400 14.400"><use href="#ic-y"/></svg>
<div class="row" style="top:532.3px;transform:scaleX(.905)">Винт 5-14-Ц-ОСТ 1 31542-80</div>
<div class="arr" style="top:548.0px"></div>
<svg style="left:22px;top:546.1px" width="14" height="14" viewBox="0 0 14.400 14.400"><use href="#ic-y"/></svg>
<div class="row" style="top:546.9px;transform:scaleX(.905)">Винт 5-14-Ц-ОСТ 1 31542-80</div>
<div class="arr" style="top:562.6px"></div>
<svg style="left:22px;top:560.7px" width="14" height="14" viewBox="0 0 14.400 14.400"><use href="#ic-y"/></svg>
<div class="row" style="top:561.5px;transform:scaleX(.905)">Болт 10-22-Ц-ОСТ 1 31102-80</div>
<div class="arr" style="top:577.2px"></div>
<svg style="left:22px;top:575.3px" width="14" height="14" viewBox="0 0 14.400 14.400"><use href="#ic-y"/></svg>
<div class="row" style="top:576.1px;transform:scaleX(.905)">Шпилька М3-6dx18.36.А ГОСТ 22032-76</div>
<div class="arr" style="top:591.8px"></div>
<svg style="left:22px;top:589.9px" width="14" height="14" viewBox="0 0 14.400 14.400"><use href="#ic-b"/></svg>
<div class="row" style="top:590.7px">Губка плоская</div>
<div class="arr" style="top:606.5px"></div>
<svg style="left:22px;top:604.6px" width="14" height="14" viewBox="0 0 14.400 14.400"><use href="#ic-c"/></svg>
<div class="row" style="top:605.4px;transform:scaleX(.905)">Винт 5-14-Ц-ОСТ 1 31542-80</div>
<!-- document area -->
<div class="a" style="left:251px;top:118px;width:1308px;height:722px;background:#fff;border:1px solid #e2e2e2;border-top:none"></div>
<div class="a" style="left:251px;top:118px;width:1308px;height:17px;background:#f6f6f6;border-bottom:1px solid #d9d9d9"></div>
<svg style="left:251px;top:118px" width="100" height="17" viewBox="251 118 100 17"><path d="M253.500 135.500l15-14h71.500q2 0 2 2v12z" fill="#fff" stroke="#d0d0d0" stroke-width="1"/><path d="M254 135.500h88" stroke="#fff" stroke-width="1.500"/></svg>
<div class="t" style="left:273px;top:121px;color:#000;font-weight:bold">Тиски.dwa*</div>
<div class="a" style="left:330px;top:123px;width:9px;height:9px;background:#d0484c"></div>
<svg style="left:330px;top:123px" width="9" height="9" viewBox="0 0 9 9"><path d="M2.500 2.500l4 4M6.500 2.500l-4 4" stroke="#fff" stroke-width="1.300"/></svg>
<svg style="left:1545.500px;top:125px" width="8" height="5" viewBox="0 0 8 5"><path d="M0 0h8l-4 4.500z" fill="#111"/></svg>
<!-- viewport frame -->
<div class="a" style="left:253px;top:135px;width:1304px;height:686px;background:#858585"></div>
<div class="vp" id="vp1" style="left:254px;top:136px;width:650px;height:341px"><svg width="650" height="341" viewBox="254 136 650 341" style="left:0;top:0">
<defs>
<linearGradient id="gHandle" x1="0" y1="0" x2="0" y2="1"><stop offset="0" stop-color="#f3ece8"/><stop offset=".35" stop-color="#e6dbd4"/><stop offset="1" stop-color="#c9bcb4"/></linearGradient>
<linearGradient id="gShadeV" x1="0" y1="0" x2="0" y2="1"><stop offset="0" stop-color="#7d5010"/><stop offset="1" stop-color="#c68107"/></linearGradient>
<linearGradient id="gShadeV2" x1="0" y1="0" x2="0" y2="1"><stop offset="0" stop-color="#8f5c0d"/><stop offset="1" stop-color="#c68107"/></linearGradient>
<linearGradient id="gBaseH" x1="0" y1="0" x2="1" y2="0"><stop offset="0" stop-color="#b97708"/><stop offset=".12" stop-color="#cf880c"/><stop offset=".7" stop-color="#c68107"/><stop offset="1" stop-color="#9c650c"/></linearGradient>
<linearGradient id="gDome" x1="0" y1="0" x2="1" y2="0"><stop offset="0" stop-color="#c68107"/><stop offset=".3" stop-color="#d68c0c"/><stop offset=".75" stop-color="#b87809"/><stop offset="1" stop-color="#96610c"/></linearGradient>
<linearGradient id="gAnvU" x1="0" y1="0" x2="0" y2="1"><stop offset="0" stop-color="#c68107"/><stop offset="1" stop-color="#9f670a"/></linearGradient>
<linearGradient id="gShadeR" x1="0" y1="0" x2="1" y2="1"><stop offset="0" stop-color="#6f4708"/><stop offset=".6" stop-color="#8a5a0a"/><stop offset="1" stop-color="#b5760a"/></linearGradient>
</defs>
<g stroke="#100a03" stroke-width="1.200" stroke-linejoin="round" fill="#c68107">
<!-- handle -->
<rect x="314.500" y="311.300" width="58.500" height="57" fill="url(#gHandle)"/>
<path d="M316.500 311.300V368.300M314.500 339.200H322.700M354.700 339.200H372.700" fill="none" stroke-width="1"/>
<circle cx="338.700" cy="339.200" r="16" fill="#e3d7cf" stroke-width="1.500"/>
<!-- slide -->
<path d="M434.300 301H471.500V298.500H815.100V381.800H434.300Z"/>
<path d="M471.500 298.500V320.800H590M772 320.800H815.100" fill="none"/>
<!-- bracket -->
<path d="M498.500 381.800V388Q498.500 391.300 501.500 392.700L560.500 420.700H578V381.800Z"/>
<path d="M505.500 381.800V386Q505.500 388.500 508 389.700L562.200 414.700H577M561.700 414.700V420.700M570.300 381.800V420.800" fill="none" stroke-width="1"/>
<rect x="570.800" y="382.800" width="5.500" height="10.500" fill="#f4f4f4" stroke="none"/>
<!-- base -->
<path d="M567.900 420.700H783.600V427C783.600 434 788 438 793.300 441.300H557.100C561 438 567.900 433 567.900 425Z" fill="url(#gBaseH)"/>
<path d="M567.700 426.200H783.600M565 433H786.500M561.500 437.300H790" fill="none" stroke-width="1"/>
<path d="M555.600 458.700V446Q555.600 441.300 560 441.300H791Q795.400 441.300 795.400 446V458.700Z" fill="url(#gBaseH)"/>
<path d="M556 446.400H795" fill="none" stroke-width=".6" stroke-opacity=".7"/>
<path d="M580 441.300V458.700M621 441.300V458.700M621 441.300Q634 442 638.200 449V458.700M713.300 458.700V449Q717 442 729.700 441.300M729.700 441.300V458.700M770.300 441.300V458.700" fill="none" stroke-width="1"/>
<path d="M762 396.800H783.600V427H762Z" fill="url(#gShadeR)" stroke="none"/><path d="M773.600 381.400H778.500V396.800H783.600V427" fill="none"/><path d="M773.600 381.400H778.500V396.800H773.600Z" fill="#c68107" stroke="none"/>
<!-- fixed V jaw (gray) -->
<path d="M583.400 197.300H604V259.200H583.400L584.500 252L586 245L588 238L589.500 228L588 218L586 211L584.500 204Z" fill="#7c7c7e" stroke="#2a2a2a"/>
<!-- body -->
<path d="M581.600 182.500C582 190 585 197.300 592 197.300H600L603 231L608 263C610 275 606 290 600 302C592 315 580 325 578 341V420.800H764V416C766.500 413 768.500 408 768.500 400.200H773.600V343C773.600 338 774.300 336.500 775.300 334.700L793.600 287.400H833.500C840 287.100 843.800 282 843.800 275V259.400H724V264.800H706.700C700 264.800 698.700 258 698.700 253.800V197.300H706.700C712 197.300 716.700 190 716.700 182.500Z"/>
<!-- neck shading -->
<path d="M604.500 198H689.700V231.200H607.500Z" fill="url(#gShadeV2)" stroke="none"/>
<!-- dome shading at bottom -->
<path d="M588 417C589 404 600 396.400 616.400 396.400H734.400C752 396.400 761 404 763.800 417Z" fill="url(#gDome)" stroke="none"/>
<!-- top block -->
<rect x="590.300" y="154.600" width="119.400" height="28" />
<path d="M595.500 154.600V182.500M704.100 154.600V182.500" fill="none" stroke-width="1"/>
<path d="M581.600 182.500H716.700" fill="none"/>
<path d="M585 190.900Q587 190.900 589 190.900H710Q712 190.900 714 190.900M592 197.300H706.700M586 190.900L592 186M712 190.900L707 186" fill="none" stroke-width="1"/>
<!-- gray plates on fixed jaw -->
<path d="M574.400 154.600H590.300V182.500H574.400L575.200 178L574.400 173L575.200 168L574.400 163L575.200 158Z" fill="#7c7c7e" stroke="#2a2a2a"/>
<path d="M709.700 154.600H725.300L724.500 158L725.300 163L724.500 168L725.300 173L724.500 178L725.300 182.500H709.700Z" fill="#7c7c7e" stroke="#2a2a2a"/>
<!-- neck inner lines -->
<path d="M604.500 197.300L607.500 231L612.500 263C614.500 275 610.500 291 604.500 303C597 316 585 326 583 342V420.800" fill="none" stroke-width="1"/>
<path d="M603 231.200H698.700M608.300 265L612.800 266M578 341H583" fill="none" stroke-width="1"/>
<path d="M689.700 197.300V253.800C689.700 262 694 272.700 706.700 272.700H724M706.700 264.800V272.700" fill="none" stroke-width="1"/>
<!-- anvil -->
<path d="M724 259.400H843.800V275C843.800 282 840 287.100 833.500 287.100H735.600C728 287.100 724 281 724 273.700Z"/>
<path d="M724.500 274H843.300V275C843.300 282 840 286.600 833.500 286.600H735.600C728.500 286.600 724.500 281 724.500 274Z" fill="url(#gAnvU)" stroke="none"/>
<path d="M724 273.700H843.800M833.500 259.400V273.700Q833.500 281 831.500 287.100" fill="none" stroke-width="1"/>
<!-- rib -->
<path d="M778.800 287.400L762.200 330.200C760.800 333.500 760 336 760 339.300V400.200M787.300 287.400L770.800 332.500C769.200 336 768.500 338.500 768.500 342V400.200M760 345.200H773.600M762.200 330.200L775.300 334.700M760 400.200H768.500" fill="none" stroke-width="1"/>
<!-- arches -->
<path d="M584.400 420.800C585 400 598 391.800 616.400 391.800H734.400C750 391.800 760 400 764 416" fill="none" stroke-width="1"/>
<path d="M588 417C589 404 600 396.400 616.400 396.400H734.400C749 396.400 759 404 763.500 416.500M588 417H764M610 391.800V396.400M740 391.800V396.400" fill="none" stroke-width="1"/>
<!-- wing nut -->
<path d="M668.500 386L659.800 374.500C656.800 369.500 659.500 366.300 663.500 367.300C668.500 368.500 671.300 376 671.800 384.400H680.600C681.100 376 683.900 368.500 688.900 367.300C692.900 366.300 695.600 369.500 692.600 374.500L683.900 386L682.300 397.500H670.100Z" fill="#8c8c8e" stroke="#1e1e1e" stroke-width="1.100"/>
<path d="M668.500 386Q676.200 383 683.900 386" fill="none" stroke="#1e1e1e" stroke-width=".8"/>
<rect x="673.700" y="397.500" width="5" height="1.800" fill="#3a3a3a" stroke="none"/>
<!-- movable jaw -->
<path d="M416 155.200H451V197.300H434.300V380.500H384C377 380.500 372.700 376 372.700 370V199C372.700 175 392 155.200 416 155.200Z"/>
<path d="M399.400 176.500C399.400 187 406 196.500 419.700 196.500H434.300V231.600H420.600C408 231.600 398 229 391.600 222C388 218 385 212 384.300 201.700L400.900 185.700Z" fill="url(#gShadeV)" stroke="none"/>
<path d="M384.300 201.700L400.900 185.700C402 189 405 193 408 195L391.600 222C388 218 385 212 384.300 201.700Z" fill="#c68107" stroke="none"/>
<path d="M391.600 222V380.500M372.700 362.400H434.300M372.700 201.700H384.300M384.300 201.700C384.300 178 396 160 416 155.500M419.700 155.500A20.200 20.500 0 0 0 419.700 196.500H451M384.300 201.700C385 212 388 218 391.600 222C398 229 408 231.600 420.600 231.600H434.300M408 195L391.600 222M400.900 185.700L384.300 201.700M420.600 196.500V231.600M434.300 197.300V380.500" fill="none" stroke-width="1"/>
<!-- gray jaws on movable -->
<path d="M442.400 155.200H458.400L457.600 159L458.400 164L457.600 169L458.400 174L457.600 179L458.400 182.200H442.400Z" fill="#7c7c7e" stroke="#2a2a2a"/>
<path d="M434.300 197.300H453.200L452 204L450.500 211L448.500 218L447 228L448.500 238L450.500 245L452 252L453.200 258.400H434.300Z" fill="#7c7c7e" stroke="#2a2a2a"/>
</g>
<!-- compass -->
<g fill="none" stroke="#c0c0c0" stroke-width=".9"><circle cx="862.400" cy="178.600" r="33.600"/><circle cx="862.400" cy="178.600" r="22.400"/><path d="M828.800 178.600H896M862.400 145V208" stroke-width="1.100"/></g>
<circle cx="862.400" cy="178.600" r="2.400" fill="#e8c3a4" stroke="#d9b090" stroke-width=".5"/>
</svg>
<div class="vlab" style="left:583px;top:72px;width:52px">Спереди</div>
</div>
<div class="vp" id="vp2" style="left:906px;top:136px;width:650px;height:341px"><svg width="650" height="341" viewBox="906 136 650 341" style="left:0;top:0">
<defs>
<linearGradient id="gCap" x1="0" y1="0" x2="0" y2="1"><stop offset="0" stop-color="#f6f1ee"/><stop offset=".4" stop-color="#ebe2dc"/><stop offset="1" stop-color="#cdc0b8"/></linearGradient>
<linearGradient id="gBase2" x1="0" y1="0" x2="1" y2="0"><stop offset="0" stop-color="#c07c0a"/><stop offset=".2" stop-color="#d48b0c"/><stop offset=".55" stop-color="#c68107"/><stop offset=".85" stop-color="#a96e0c"/><stop offset="1" stop-color="#946010"/></linearGradient>
<linearGradient id="gBand2" x1="0" y1="0" x2="0" y2="1"><stop offset="0" stop-color="#a66c0c"/><stop offset=".5" stop-color="#c68107"/></linearGradient>
</defs>
<g stroke="#100a03" stroke-width="1.200" stroke-linejoin="round" fill="#c68107">
<!-- handle bars -->
<rect x="1084.400" y="329.700" width="72" height="26.600" fill="url(#gCap)"/>
<rect x="1277.800" y="329.700" width="71.500" height="26.600" fill="url(#gCap)"/>
<rect x="1067" y="325.800" width="17.400" height="33.800" rx="5" fill="url(#gCap)"/>
<rect x="1349" y="325.800" width="17.500" height="33.800" rx="5" fill="url(#gCap)"/>
<path d="M1067 343.200H1084.400M1349 343.200H1366.500" fill="none" stroke-width="1"/>
<!-- wing nuts -->
<path d="M1121 399.900V388H1128L1122 380C1119 374 1122 371 1125 371.500C1129 372 1131 380 1131 388H1133C1133 380 1135 372 1138.500 371.500C1142 371 1144 375 1141 382L1136 399.900Z" fill="#8a8a8c" stroke="#222"/>
<path d="M1127 373L1129 388M1136.500 373L1134 399" fill="none" stroke="#222" stroke-width=".7"/>
<path d="M1292.400 399.900L1294.500 386H1311.500L1313.300 399.900Z" fill="#8f8f91" stroke="#222"/>
<rect x="1300" y="371" width="5.400" height="28" fill="#6f6f71" stroke="#222" stroke-width=".8"/>
<!-- base -->
<path d="M1122 401H1312C1320 401 1325.700 410 1325.700 419.500V430.400L1337 445.600H1096.900L1107.800 430.400V419.500C1107.800 410 1113 401 1122 401Z" fill="url(#gBase2)"/>
<path d="M1107.800 419.500H1154.600M1279 419.500H1325.700M1107.800 430.400H1325.700M1103.500 436.500H1330M1097 445H1337" fill="none" stroke-width="1"/>
<path d="M1095.800 463.100V450Q1095.800 445.600 1100 445.600H1333.500Q1337.700 445.600 1337.700 450V463.100Z" fill="url(#gBase2)"/>
<path d="M1120.800 445.600V463.100M1161.600 445.600V463.100M1161.600 445.600Q1174 446 1178.600 453V463.100M1254.900 463.100V453Q1259 446 1271.200 445.600M1271.200 445.600V463.100M1312.600 445.600V463.100" fill="none" stroke-width="1"/>
<!-- column -->
<path d="M1156.100 261.800H1277.800V397.700C1277.800 410 1279 415 1281 419.500H1152.400C1154.600 415 1156.100 410 1156.100 397.700Z" stroke="none"/>
<path d="M1281 419.500C1279 415 1277.800 410 1277.800 397.700V261.800M1156.100 261.800V397.700C1156.100 410 1154.600 415 1152.400 419.500" fill="none"/>
<path d="M1161.600 289V397C1161.600 408 1160 414 1157.900 419.500M1272.300 289V397C1272.300 408 1274 414 1276 419.500M1216.700 399.900V445M1156.100 331Q1164 337 1170.300 338M1277.800 331Q1270 337 1262.500 338M1156.100 349H1170.300M1262.500 349H1277.800" fill="none" stroke-width="1"/>
<!-- inner box -->
<path d="M1170.300 287.600H1262.500V399.900H1183.400V385.700H1170.300Z" fill="#c47f0b"/>
<path d="M1170.300 297.400H1186.200V287.600M1247.300 287.600V297.400H1262.500M1175.600 385.700V323.700L1173.300 320V299.300H1260.300V320L1258 323.700V385.700M1175.500 301.800H1258M1170.300 385.700H1199.700M1233.700 385.700H1262.500" fill="none" stroke-width="1"/>
<path d="M1189.500 385.700V323Q1189.500 314.900 1197.500 314.900H1236.600Q1244.600 314.900 1244.600 323V385.700" fill="none" stroke-width="1"/>
<circle cx="1216.700" cy="342.800" r="22.400" fill="none" stroke-width="1"/>
<circle cx="1216.700" cy="342.800" r="13.100" fill="#e9dfd8" stroke-width="1.400"/>
<path d="M1204.800 363.500L1207 358.500H1226.400L1228.600 363.500Z" stroke-width="1"/>
<path d="M1201.900 363.500H1231.600V370.500H1201.900Z" fill="#a9d3ec" stroke="#2b4a5e" stroke-width="1"/>
<path d="M1216.700 363.500V370.500" stroke="#2b4a5e" stroke-width=".8" fill="none"/>
<path d="M1199.700 370.500H1233.700V390H1236.800V399.900H1196.500V390H1199.700Z"/>
<path d="M1199.700 390H1233.700M1191.700 385.700V399.900M1241.500 385.700V399.900" fill="none" stroke-width="1"/>
<rect x="1259.700" y="386" width="2.800" height="10.600" fill="#f4f4f4" stroke="none"/>
<!-- neck + flares -->
<path d="M1127 199.300H1306.600C1290 203 1277.600 215 1277.600 232.800V261.800H1155.500V232.800C1155.500 215 1143 203 1127 199.300Z"/>
<path d="M1147.900 199.300C1158 205 1164.900 217 1164.900 232.800V261.800M1285.200 199.300C1275 205 1269 217 1269 232.800V261.800M1155.500 234.200H1164.900M1269 234.200H1277.600M1155.500 258.800H1277.600" fill="none" stroke-width="1"/>
<!-- collar -->
<path d="M1138.900 261.800H1294V280Q1294 289.700 1284 289.700H1149Q1138.900 289.700 1138.900 280Z"/>
<path d="M1149.500 261.800V289.700M1283.200 261.800V289.700M1138.900 276.700H1165M1268 276.700H1294M1165.400 274.300H1267.600L1261.300 287.700H1170.800ZM1174.200 274.300V287.700M1259.700 274.300V287.700" fill="none" stroke-width="1"/>
<!-- top band -->
<rect x="1109" y="183.900" width="215.500" height="15.400" fill="url(#gBand2)"/>
<path d="M1114.400 183.900V199.300M1319 183.900V199.300" fill="none" stroke-width="1"/>
<rect x="1109.0" y="156.4" width="215.5" height="27.5" fill="#3b3b3c" stroke="#1a1a1a"/>
<path d="M1110.5 157.6h7.0v4.7h-7.0zM1120.9 157.6h7.0v4.7h-7.0zM1131.3 157.6h7.0v4.7h-7.0zM1141.7 157.6h7.0v4.7h-7.0zM1152.1 157.6h7.0v4.7h-7.0zM1162.5 157.6h7.0v4.7h-7.0zM1172.9 157.6h7.0v4.7h-7.0zM1183.3 157.6h7.0v4.7h-7.0zM1193.7 157.6h7.0v4.7h-7.0zM1204.1 157.6h7.0v4.7h-7.0zM1214.5 157.6h7.0v4.7h-7.0zM1224.9 157.6h7.0v4.7h-7.0zM1235.3 157.6h7.0v4.7h-7.0zM1245.7 157.6h7.0v4.7h-7.0zM1256.1 157.6h7.0v4.7h-7.0zM1266.5 157.6h7.0v4.7h-7.0zM1276.9 157.6h7.0v4.7h-7.0zM1287.3 157.6h7.0v4.7h-7.0zM1297.7 157.6h7.0v4.7h-7.0zM1308.1 157.6h7.0v4.7h-7.0zM1318.5 157.6h4.8v4.7h-4.8zM1110.2 164.5h2.1v4.7h-2.1zM1115.7 164.5h7.0v4.7h-7.0zM1126.1 164.5h7.0v4.7h-7.0zM1136.5 164.5h7.0v4.7h-7.0zM1146.9 164.5h7.0v4.7h-7.0zM1157.3 164.5h7.0v4.7h-7.0zM1167.7 164.5h7.0v4.7h-7.0zM1178.1 164.5h7.0v4.7h-7.0zM1188.5 164.5h7.0v4.7h-7.0zM1198.9 164.5h7.0v4.7h-7.0zM1209.3 164.5h7.0v4.7h-7.0zM1219.7 164.5h7.0v4.7h-7.0zM1230.1 164.5h7.0v4.7h-7.0zM1240.5 164.5h7.0v4.7h-7.0zM1250.9 164.5h7.0v4.7h-7.0zM1261.3 164.5h7.0v4.7h-7.0zM1271.7 164.5h7.0v4.7h-7.0zM1282.1 164.5h7.0v4.7h-7.0zM1292.5 164.5h7.0v4.7h-7.0zM1302.9 164.5h7.0v4.7h-7.0zM1313.3 164.5h7.0v4.7h-7.0zM1110.5 171.3h7.0v4.7h-7.0zM1120.9 171.3h7.0v4.7h-7.0zM1131.3 171.3h7.0v4.7h-7.0zM1141.7 171.3h7.0v4.7h-7.0zM1152.1 171.3h7.0v4.7h-7.0zM1162.5 171.3h7.0v4.7h-7.0zM1172.9 171.3h7.0v4.7h-7.0zM1183.3 171.3h7.0v4.7h-7.0zM1193.7 171.3h7.0v4.7h-7.0zM1204.1 171.3h7.0v4.7h-7.0zM1214.5 171.3h7.0v4.7h-7.0zM1224.9 171.3h7.0v4.7h-7.0zM1235.3 171.3h7.0v4.7h-7.0zM1245.7 171.3h7.0v4.7h-7.0zM1256.1 171.3h7.0v4.7h-7.0zM1266.5 171.3h7.0v4.7h-7.0zM1276.9 171.3h7.0v4.7h-7.0zM1287.3 171.3h7.0v4.7h-7.0zM1297.7 171.3h7.0v4.7h-7.0zM1308.1 171.3h7.0v4.7h-7.0zM1318.5 171.3h4.8v4.7h-4.8zM1110.2 178.2h2.1v4.7h-2.1zM1115.7 178.2h7.0v4.7h-7.0zM1126.1 178.2h7.0v4.7h-7.0zM1136.5 178.2h7.0v4.7h-7.0zM1146.9 178.2h7.0v4.7h-7.0zM1157.3 178.2h7.0v4.7h-7.0zM1167.7 178.2h7.0v4.7h-7.0zM1178.1 178.2h7.0v4.7h-7.0zM1188.5 178.2h7.0v4.7h-7.0zM1198.9 178.2h7.0v4.7h-7.0zM1209.3 178.2h7.0v4.7h-7.0zM1219.7 178.2h7.0v4.7h-7.0zM1230.1 178.2h7.0v4.7h-7.0zM1240.5 178.2h7.0v4.7h-7.0zM1250.9 178.2h7.0v4.7h-7.0zM1261.3 178.2h7.0v4.7h-7.0zM1271.7 178.2h7.0v4.7h-7.0zM1282.1 178.2h7.0v4.7h-7.0zM1292.5 178.2h7.0v4.7h-7.0zM1302.9 178.2h7.0v4.7h-7.0zM1313.3 178.2h7.0v4.7h-7.0z" fill="#7b7b7d" stroke="none"/>
<circle cx="1152.500" cy="170.300" r="7.500" fill="#a9d3ec" stroke="#1d2a33" stroke-width="1.200"/>
<circle cx="1281" cy="170.300" r="7.500" fill="#a9d3ec" stroke="#1d2a33" stroke-width="1.200"/>
<path d="M1145.500 169.300H1159.500M1145.500 171.300H1159.500M1274 169.300H1288M1274 171.300H1288" stroke="#2f4656" stroke-width=".7" fill="none"/>
</g>
<g fill="none" stroke="#c0c0c0" stroke-width=".9"><circle cx="1514.400" cy="178.600" r="33.600"/><circle cx="1514.400" cy="178.600" r="22.400"/><path d="M1480.800 178.600H1548M1514.400 145V208" stroke-width="1.100"/></g>
<circle cx="1536.500" cy="178.600" r="2.400" fill="#e8c3a4" stroke="#d9b090" stroke-width=".5"/>
</svg>
<div class="vlab" style="left:586px;top:72px;width:46px">Справа</div>
</div>
<div class="vp" id="vp3" style="left:254px;top:479px;width:650px;height:341px"><svg width="650" height="341" viewBox="254 479 650 341" style="left:0;top:0">
<defs>
<linearGradient id="gBarH" x1="0" y1="0" x2="1" y2="0"><stop offset="0" stop-color="#d2c6be"/><stop offset=".4" stop-color="#f1eae6"/><stop offset="1" stop-color="#d0c3bb"/></linearGradient>
<linearGradient id="gHeadV" x1="0" y1="0" x2="0" y2="1"><stop offset="0" stop-color="#d6cac2"/><stop offset=".35" stop-color="#ece4df"/><stop offset="1" stop-color="#c6b9b1"/></linearGradient>
<linearGradient id="gAnvR" x1="0" y1="0" x2="1" y2="0"><stop offset="0" stop-color="#c68107"/><stop offset="1" stop-color="#94600e"/></linearGradient>
<linearGradient id="gAnvT" x1="0" y1="0" x2="0" y2="1"><stop offset="0" stop-color="#a0680d"/><stop offset="1" stop-color="#c68107"/></linearGradient>
<linearGradient id="gAnvB" x1="0" y1="1" x2="0" y2="0"><stop offset="0" stop-color="#a0680d"/><stop offset="1" stop-color="#c68107"/></linearGradient>
<linearGradient id="gEar" x1="0" y1="0" x2="1" y2="0"><stop offset="0" stop-color="#8a5a0e"/><stop offset="1" stop-color="#c68107"/></linearGradient>
<linearGradient id="gEarL" x1="0" y1="0" x2="1" y2="0"><stop offset="0" stop-color="#dc930f"/><stop offset="1" stop-color="#c68107"/></linearGradient><linearGradient id="gEarD" x1="0" y1="0" x2=".6" y2="1"><stop offset="0" stop-color="#c68107"/><stop offset="1" stop-color="#a96d08"/></linearGradient><linearGradient id="gEarD2" x1="0" y1="1" x2=".6" y2="0"><stop offset="0" stop-color="#c68107"/><stop offset="1" stop-color="#a96d08"/></linearGradient>
</defs>
<g stroke="#100a03" stroke-width="1.200" stroke-linejoin="round" fill="#c68107">
<!-- screw head + handle bar -->
<rect x="324.800" y="510" width="28.100" height="279" fill="url(#gBarH)" stroke="none"/>
<path d="M324.800 518.400V621M352.900 518.400V621M324.800 677.500V780.700M352.900 677.500V780.700" fill="none"/>
<rect x="321.900" y="500.900" width="34.600" height="17.500" rx="3.500" fill="url(#gBarH)"/>
<rect x="321.900" y="780.700" width="34.600" height="17.500" rx="3.500" fill="url(#gBarH)"/>
<path d="M314.600 620.600H324.800Q338.800 628 352.900 620.600H372.900V677.800H352.900Q338.800 670.500 324.800 677.800H314.600Z" fill="url(#gHeadV)"/>
<path d="M316.600 620.600V677.800" fill="none" stroke-width=".8"/>
<!-- anvil from below -->
<path d="M785 572.700H832Q843.600 572.700 843.600 584.500V714.500Q843.600 726.400 832 726.400H785Z"/>
<path d="M785 573.200H831.600V585.700H785Z" fill="url(#gAnvT)" stroke="none"/>
<path d="M785 713.100H831.600V725.900H785Z" fill="url(#gAnvB)" stroke="none"/>
<path d="M831.600 573.200Q843 573.500 843.100 584.500V714.500Q843 725.500 831.600 725.900Z" fill="url(#gAnvR)" stroke="none"/>
<path d="M785 585.700H829.600Q838 585.700 843.600 582M785 604.200H829.600Q838 604.200 843.600 600M785 606.800H814.800V690.500H785M793 621.600H814.800M793 626.800H814.800M793 671H814.800M793 677.500H814.800M785 693.600H829.600Q838 693.600 843.600 698M785 713.100H829.600Q838 713.100 843.600 717M829.600 572.700V726.400M831.600 572.700V726.400" fill="none" stroke-width="1"/>
<!-- slide + nut housing -->
<path d="M471 606.300H503.800V692.500H471Z"/>
<path d="M499 612.400Q499 607.400 504 607.400H570V691.200H504Q499 691.200 499 686.200Z"/>
<path d="M503.800 610.300V688M501 610.300H566M501 684.500H566M560.400 607.400V691.200" fill="none" stroke-width="1"/>
<!-- jaw plate -->
<rect x="399.300" y="542.800" width="51" height="212.800"/>
<rect x="450.300" y="542.800" width="7.500" height="212.800" fill="#9c9c9e" stroke="#444" stroke-width=".8"/>
<path d="M457 545V753" fill="none" stroke="#333" stroke-width=".8" stroke-dasharray="1.500 2.500"/>
<path d="M420.200 542.800V555.500M420.200 742.9V755.600" fill="none" stroke-width="1"/>
<!-- jaw body -->
<path d="M373.0 604.8C373.5 599.0 375.5 596.5 377.8 595.2C382.0 593.0 385.0 591.5 387.4 589.7C392.5 586.0 395.5 582.0 396.3 578.8C397.5 574.0 397.0 570.0 398.0 564.5C399.0 558.5 402.5 555.5 407.2 555.5H433.9V608.2H499V690.1H433.9V742.9L407.2 742.9C402.5 742.9 399.0 739.9 398.0 733.9C397.0 728.4 397.5 724.4 396.3 719.6C395.5 716.4 392.5 712.4 387.4 708.7C385.0 706.9 382.0 705.4 377.8 703.2C375.5 701.9 373.5 699.4 373.0 693.6Z"/>
<path d="M407.9 556.9C409 562 408 567 406.500 572C405 577.500 403.500 581 401 584.200C399.500 586.500 397.500 588 395.600 589H420.2V555.5H407.2Z" fill="url(#gEarL)" stroke="none"/>
<path d="M407.9 741.5C409.0 736.4 408.0 731.4 406.5 726.4C405.0 720.9 403.5 717.4 401.0 714.2C399.5 711.9 397.5 710.4 395.6 709.4H420.2V742.9H407.2Z" fill="url(#gEarL)" stroke="none"/>
<path d="M420.2 555.5H433.9V589H420.2Z" fill="url(#gEarD)" stroke="none"/>
<path d="M420.2 742.9H433.9V709.4H420.2Z" fill="url(#gEarD2)" stroke="none"/>
<path d="M407.9 556.9C409 562 408 567 406.500 572C405 577.500 403.500 581 401 584.200C399.500 586.500 397.500 588 395.600 589M407.9 741.5C409.0 736.4 408.0 731.4 406.5 726.4C405.0 720.9 403.5 717.4 401.0 714.2C399.5 711.9 397.5 710.4 395.6 709.4M391.200 589V709.4M373 608.200H433.900M373 690.100H433.900M391.500 589H433.900M391.500 709.4H433.900M420.200 555.500V589M420.200 709.4V742.9M433.900 608.200V690.100" fill="none" stroke-width="1"/>
<!-- channel and screw -->
<rect x="433.600" y="622.300" width="65.400" height="54.700" fill="#c47f0b"/>
<path d="M433.600 627.900H499M433.600 671H499" fill="none" stroke-width="1"/>
<rect x="442.3" y="636.6" width="56.7" height="25.6" fill="#7a7a7a" stroke="#1a1a1a" stroke-width=".8"/><path d="M443.8 637.8h1.800v1.800h-1.800zM447.2 637.8h1.800v1.800h-1.800zM450.6 637.8h1.800v1.800h-1.800zM454.0 637.8h1.800v1.800h-1.800zM457.4 637.8h1.800v1.800h-1.800zM460.8 637.8h1.800v1.800h-1.800zM464.2 637.8h1.800v1.800h-1.800zM467.6 637.8h1.800v1.800h-1.800zM471.0 637.8h1.800v1.800h-1.800zM474.4 637.8h1.800v1.800h-1.800zM477.8 637.8h1.800v1.800h-1.800zM481.2 637.8h1.800v1.800h-1.800zM484.6 637.8h1.800v1.800h-1.800zM488.0 637.8h1.800v1.800h-1.800zM491.4 637.8h1.800v1.800h-1.800zM494.8 637.8h1.800v1.800h-1.800zM498.2 637.8h1.800v1.800h-1.800zM445.5 640.7h1.800v1.800h-1.800zM448.9 640.7h1.800v1.800h-1.800zM452.3 640.7h1.800v1.800h-1.800zM455.7 640.7h1.800v1.800h-1.800zM459.1 640.7h1.800v1.800h-1.800zM462.5 640.7h1.800v1.800h-1.800zM465.9 640.7h1.800v1.800h-1.800zM469.3 640.7h1.800v1.800h-1.800zM472.7 640.7h1.800v1.800h-1.800zM476.1 640.7h1.800v1.800h-1.800zM479.5 640.7h1.800v1.800h-1.800zM482.9 640.7h1.800v1.800h-1.800zM486.3 640.7h1.800v1.800h-1.800zM489.7 640.7h1.800v1.800h-1.800zM493.1 640.7h1.800v1.800h-1.800zM496.5 640.7h1.800v1.800h-1.800zM443.8 643.6h1.800v1.800h-1.800zM447.2 643.6h1.800v1.800h-1.800zM450.6 643.6h1.800v1.800h-1.800zM454.0 643.6h1.800v1.800h-1.800zM457.4 643.6h1.800v1.800h-1.800zM460.8 643.6h1.800v1.800h-1.800zM464.2 643.6h1.800v1.800h-1.800zM467.6 643.6h1.800v1.800h-1.800zM471.0 643.6h1.800v1.800h-1.800zM474.4 643.6h1.800v1.800h-1.800zM477.8 643.6h1.800v1.800h-1.800zM481.2 643.6h1.800v1.800h-1.800zM484.6 643.6h1.800v1.800h-1.800zM488.0 643.6h1.800v1.800h-1.800zM491.4 643.6h1.800v1.800h-1.800zM494.8 643.6h1.800v1.800h-1.800zM498.2 643.6h1.800v1.800h-1.800zM445.5 646.5h1.800v1.800h-1.800zM448.9 646.5h1.800v1.800h-1.800zM452.3 646.5h1.800v1.800h-1.800zM455.7 646.5h1.800v1.800h-1.800zM459.1 646.5h1.800v1.800h-1.800zM462.5 646.5h1.800v1.800h-1.800zM465.9 646.5h1.800v1.800h-1.800zM469.3 646.5h1.800v1.800h-1.800zM472.7 646.5h1.800v1.800h-1.800zM476.1 646.5h1.800v1.800h-1.800zM479.5 646.5h1.800v1.800h-1.800zM482.9 646.5h1.800v1.800h-1.800zM486.3 646.5h1.800v1.800h-1.800zM489.7 646.5h1.800v1.800h-1.800zM493.1 646.5h1.800v1.800h-1.800zM496.5 646.5h1.800v1.800h-1.800zM443.8 649.4h1.800v1.800h-1.800zM447.2 649.4h1.800v1.800h-1.800zM450.6 649.4h1.800v1.800h-1.800zM454.0 649.4h1.800v1.800h-1.800zM457.4 649.4h1.800v1.800h-1.800zM460.8 649.4h1.800v1.800h-1.800zM464.2 649.4h1.800v1.800h-1.800zM467.6 649.4h1.800v1.800h-1.800zM471.0 649.4h1.800v1.800h-1.800zM474.4 649.4h1.800v1.800h-1.800zM477.8 649.4h1.800v1.800h-1.800zM481.2 649.4h1.800v1.800h-1.800zM484.6 649.4h1.800v1.800h-1.800zM488.0 649.4h1.800v1.800h-1.800zM491.4 649.4h1.800v1.800h-1.800zM494.8 649.4h1.800v1.800h-1.800zM498.2 649.4h1.800v1.800h-1.800zM445.5 652.3h1.800v1.800h-1.800zM448.9 652.3h1.800v1.800h-1.800zM452.3 652.3h1.800v1.800h-1.800zM455.7 652.3h1.800v1.800h-1.800zM459.1 652.3h1.800v1.800h-1.800zM462.5 652.3h1.800v1.800h-1.800zM465.9 652.3h1.800v1.800h-1.800zM469.3 652.3h1.800v1.800h-1.800zM472.7 652.3h1.800v1.800h-1.800zM476.1 652.3h1.800v1.800h-1.800zM479.5 652.3h1.800v1.800h-1.800zM482.9 652.3h1.800v1.800h-1.800zM486.3 652.3h1.800v1.800h-1.800zM489.7 652.3h1.800v1.800h-1.800zM493.1 652.3h1.800v1.800h-1.800zM496.5 652.3h1.800v1.800h-1.800zM443.8 655.2h1.800v1.800h-1.800zM447.2 655.2h1.800v1.800h-1.800zM450.6 655.2h1.800v1.800h-1.800zM454.0 655.2h1.800v1.800h-1.800zM457.4 655.2h1.800v1.800h-1.800zM460.8 655.2h1.800v1.800h-1.800zM464.2 655.2h1.800v1.800h-1.800zM467.6 655.2h1.800v1.800h-1.800zM471.0 655.2h1.800v1.800h-1.800zM474.4 655.2h1.800v1.800h-1.800zM477.8 655.2h1.800v1.800h-1.800zM481.2 655.2h1.800v1.800h-1.800zM484.6 655.2h1.800v1.800h-1.800zM488.0 655.2h1.800v1.800h-1.800zM491.4 655.2h1.800v1.800h-1.800zM494.8 655.2h1.800v1.800h-1.800zM498.2 655.2h1.800v1.800h-1.800zM445.5 658.1h1.800v1.800h-1.800zM448.9 658.1h1.800v1.800h-1.800zM452.3 658.1h1.800v1.800h-1.800zM455.7 658.1h1.800v1.800h-1.800zM459.1 658.1h1.800v1.800h-1.800zM462.5 658.1h1.800v1.800h-1.800zM465.9 658.1h1.800v1.800h-1.800zM469.3 658.1h1.800v1.800h-1.800zM472.7 658.1h1.800v1.800h-1.800zM476.1 658.1h1.800v1.800h-1.800zM479.5 658.1h1.800v1.800h-1.800zM482.9 658.1h1.800v1.800h-1.800zM486.3 658.1h1.800v1.800h-1.800zM489.7 658.1h1.800v1.800h-1.800zM493.1 658.1h1.800v1.800h-1.800zM496.5 658.1h1.800v1.800h-1.800zM443.8 661.0h1.800v1.800h-1.800zM447.2 661.0h1.800v1.800h-1.800zM450.6 661.0h1.800v1.800h-1.800zM454.0 661.0h1.800v1.800h-1.800zM457.4 661.0h1.800v1.800h-1.800zM460.8 661.0h1.800v1.800h-1.800zM464.2 661.0h1.800v1.800h-1.800zM467.6 661.0h1.800v1.800h-1.800zM471.0 661.0h1.800v1.800h-1.800zM474.4 661.0h1.800v1.800h-1.800zM477.8 661.0h1.800v1.800h-1.800zM481.2 661.0h1.800v1.800h-1.800zM484.6 661.0h1.800v1.800h-1.800zM488.0 661.0h1.800v1.800h-1.800zM491.4 661.0h1.800v1.800h-1.800zM494.8 661.0h1.800v1.800h-1.800zM498.2 661.0h1.800v1.800h-1.800z" fill="#1c1c1c" stroke="none"/>
<rect x="434.400" y="637" width="8" height="25" rx="2" fill="#f2ece9" stroke="none"/>
<!-- base plate -->
<path d="M675.7 530.0C693.7 530.0 708.7 533.6 722.7 537.2C735.7 540.6 755.7 532.6 775.7 529.2C787.7 527.6 796.7 535.6 796.1 548.1C795.2 561.6 787.2 577.6 787.2 593.0C787.2 611.6 795.7 629.6 795.7 649.6C795.7 669.6 787.2 687.6 787.2 706.2C787.2 721.6 795.2 737.6 796.1 751.1C796.7 763.6 787.7 771.6 775.7 770.0C755.7 766.6 735.7 758.6 722.7 762.0C708.7 765.6 693.7 769.2 675.7 769.2C657.7 769.2 642.7 765.6 628.7 762.0C615.7 758.6 595.7 766.6 575.7 770.0C563.7 771.6 554.7 763.6 555.3 751.1C556.2 737.6 564.2 721.6 564.2 706.2C564.2 687.6 555.7 669.6 555.7 649.6C555.7 629.6 564.2 611.6 564.2 593.0C564.2 577.6 556.2 561.6 555.3 548.1C554.7 535.6 563.7 527.6 575.7 529.2C595.7 532.6 615.7 540.6 628.7 537.2C642.7 533.6 657.7 530.0 675.7 530.0Z"/>
<circle cx="675.700" cy="649.600" r="105.600" fill="none" stroke-width="1"/>
<circle cx="675.700" cy="649.600" r="103.600" fill="none" stroke-width="1"/>
<path d="M574.900 649.600A100.800 100.800 0 1 0 776.500 649.600A100.800 100.800 0 1 0 574.900 649.600ZM694.300 569.700A82 82 0 0 1 694.300 729.500A19.500 19.500 0 0 0 657.100 729.500A82 82 0 0 1 657.100 569.700A19.500 19.500 0 0 0 694.300 569.700Z" fill="#9b9b9d" fill-rule="evenodd" stroke-width="1"/>
<circle cx="675.700" cy="563.800" r="6.300" fill="#a4a4a6" stroke-width="1.400"/>
<circle cx="675.700" cy="735.400" r="6.300" fill="#a4a4a6" stroke-width="1.400"/>
<circle cx="739.600" cy="649.900" r="6.300" fill="#a9d3ec" stroke-width="1.200"/>
<!-- corner holes -->
<circle cx="576.700" cy="550.900" r="9.300" fill="#f1f1f1"/>
<circle cx="576.700" cy="748" r="9.300" fill="#f1f1f1"/>
<circle cx="774.100" cy="550.900" r="9.300" fill="#f6f6f6"/>
<circle cx="774.100" cy="748" r="9.300" fill="#f6f6f6"/>
<path d="M576.700 542.300A8.800 8.800 0 0 1 576.700 559.500Z" fill="#8b8b8d" stroke-width=".8"/>
<path d="M576.700 739.300A8.800 8.800 0 0 1 576.700 756.700Z" fill="#8b8b8d" stroke-width=".8"/>
<path d="M580 543V559M580 740V756" fill="none" stroke-width=".7"/>
</g>
<g fill="none" stroke="#c0c0c0" stroke-width=".9"><circle cx="862.400" cy="521.600" r="33.600"/><circle cx="862.400" cy="521.600" r="22.400"/><path d="M828.800 521.600H896M862.400 488V551" stroke-width="1.100"/></g>
<circle cx="862.400" cy="543.600" r="2.400" fill="#e8c3a4" stroke="#d9b090" stroke-width=".5"/>
</svg>
<div class="vlab" style="left:588px;top:72px;width:40px">Снизу</div>
</div>
<div class="vp" id="vp4" style="left:906px;top:479px;width:650px;height:341px"><svg width="650" height="341" viewBox="906 479 650 341" style="left:0;top:0">
<defs>
<linearGradient id="gDome4" x1="0" y1="0" x2="1" y2="0"><stop offset="0" stop-color="#cf880c"/><stop offset=".35" stop-color="#e39a14"/><stop offset=".7" stop-color="#c68107"/><stop offset="1" stop-color="#a56b0c"/></linearGradient>
<linearGradient id="gCyl4" x1="0" y1="0" x2="1" y2="0"><stop offset="0" stop-color="#d68d0e"/><stop offset=".5" stop-color="#c68107"/><stop offset="1" stop-color="#a86d0b"/></linearGradient>
<linearGradient id="gBar4" x1="0" y1="0" x2=".45" y2="1"><stop offset="0" stop-color="#f6f1ee"/><stop offset=".5" stop-color="#e4d9d2"/><stop offset="1" stop-color="#bfb2aa"/></linearGradient>
<pattern id="pKn" width="3.400" height="3.400" patternUnits="userSpaceOnUse" patternTransform="skewY(-29.500)"><rect width="3.400" height="3.400" fill="#2d2d2e"/><rect x=".5" y=".5" width="2" height="2" fill="#636365"/></pattern>
</defs>
<g stroke="#100a03" stroke-width="1.100" stroke-linejoin="round" fill="#c68107">
<!-- base plate : thickness then top -->
<path d="M1203.300 728.500L1187 733Q1176 738.500 1178.500 745Q1181 750.500 1191 751L1203 754L1213 762L1242 778.500L1258.500 790.500Q1270 798 1281.500 790.500L1298 778.500L1326 762L1336 754L1349 751Q1360 750 1361.500 745Q1363.500 738 1353 733L1335 725Z" fill="#b67709"/>
<path d="M1203.300 723.500L1187 728Q1176 733.500 1178.500 740Q1181 745.500 1191 746L1203 749L1213 757L1242 773.500L1258.500 785.500Q1270 793 1281.500 785.500L1298 773.500L1326 757L1336 749L1349 746Q1360 745 1361.500 740Q1363.500 733 1353 728L1335 720Z" fill="#cf880c"/>
<path d="M1190 731Q1183 734 1184.500 739Q1186 743 1193 743.500L1204 746M1348 731Q1357 734 1356 739Q1354.500 743 1347 743.500L1336 746M1248 774.500L1262 784.500Q1270 789.500 1278 784.500L1292 774.500" fill="none" stroke-width=".8"/>
<ellipse cx="1189.600" cy="735.100" rx="5.300" ry="3.300" fill="#b27408"/>
<ellipse cx="1349.600" cy="735.100" rx="5.300" ry="3.300" fill="#b27408"/>
<ellipse cx="1269.600" cy="780" rx="5.500" ry="3.300" fill="#b27408"/>
<!-- swivel cylinder -->
<path d="M1201.700 728V736A66.800 38.500 0 0 0 1335.300 736V728Z" fill="url(#gCyl4)"/>
<ellipse cx="1268.500" cy="731.500" rx="66.800" ry="38.500" fill="url(#gCyl4)"/>
<ellipse cx="1268.500" cy="729" rx="64.500" ry="37" fill="none" stroke-width=".8"/>
<ellipse cx="1268.500" cy="726.500" rx="62.500" ry="36" fill="url(#gCyl4)" stroke-width=".8"/>
<ellipse cx="1268.500" cy="724" rx="61" ry="35" fill="url(#gDome4)" stroke-width=".8"/>
<!-- back legs / anvil supports -->
<path d="M1335.400 694.300H1343.200V731.100L1335.400 728Z" fill="#b97908"/>
<path d="M1316 700L1335.400 694.300V728L1316 718Z" fill="#d38b0e"/>
<path d="M1291.800 715.600L1310.200 723.300V747.600L1291.800 739.800Z" fill="#b97908"/>
<path d="M1310.200 712V747.600L1315 746V709Z" fill="#c68107"/>
<!-- dark inner of dome right -->
<path d="M1282 752Q1300 748 1320 735L1325 722L1300 712L1282 722Z" fill="#a96e0a" stroke="none"/>
<!-- under-slide bracket -->
<path d="M1183.100 677.600L1206.500 689.600V709L1184 682Z" fill="#b67709"/>
<path d="M1188 612L1241 640V700H1205V660Z" fill="#c68107" stroke="none"/>
<!-- slide -->
<path d="M1155.600 621.900L1169.900 629.700V640.500L1211.900 664.500L1208.300 674L1206.500 689.600L1155.600 660.300Z" fill="#c58009"/>
<path d="M1155.600 621.900L1186.400 606V614.900L1191 619L1169.900 629.700Z" fill="#d28b0e"/>
<path d="M1169.900 629.700L1189.100 619.600L1222 640V660L1216.600 656.700Z" fill="#d8900f"/>
<path d="M1169.900 629.700L1216.600 656.700L1211.900 664.500L1169.900 640.500Z" fill="#bd7b0a"/>
<!-- body front -->
<path d="M1218.400 634L1240.800 646.800L1256.200 646.800L1260.300 665.200V676L1286 704.900L1282.100 721.400V752.400Q1262 757 1240 748Q1218 738 1207.500 717V683.700Q1207 676 1211 670Q1218 663 1218.400 655Z"/>
<path d="M1282.100 752.400V721.400L1286 704.900L1291.800 707.500L1288 722.500V751Z" fill="#b97908"/>
<path d="M1251.100 651.600V667.100Q1251.100 676 1260.800 680" fill="none"/>
<!-- dome front torus highlight + wing nut -->
<path d="M1209 717Q1212 709 1222 711Q1250 722 1284 752Q1262 758 1240 749Q1218 739 1209 717Z" fill="url(#gDome4)"/>
<path d="M1218 713Q1226 712 1240 722Q1262 737 1280 751" fill="none" stroke-width=".8"/>
<path d="M1229.500 731L1224 724.500Q1222.500 720.500 1226 720.500Q1230 721 1232 727.500H1239Q1241 721.500 1245 722Q1248.500 723 1246 727L1241 733V737.500Q1235 740.500 1229.500 737.500Z" fill="#8d8d8f" stroke="#222"/>
<ellipse cx="1235.300" cy="729.500" rx="5.700" ry="2.700" fill="#a4a4a6" stroke="#222" stroke-width=".7"/>
<!-- neck recess under front jaw -->
<path d="M1256.200 641L1301.400 614V642.600L1260.300 665.200Z" fill="#a96d08"/>
<path d="M1260.300 665.200L1301.400 642.600Q1303 648 1309.600 649.800L1261.400 674.500Z" fill="#cf880c"/>
<path d="M1258.300 671.400L1305.500 647.800" fill="none" stroke-width=".8"/>
<path d="M1260.300 665.200L1309.600 649.800L1322 645L1259.300 682Z" fill="#cb850c" stroke="none"/>
<path d="M1261.400 674.500L1309.600 649.800" fill="none" stroke-width=".8"/>
<!-- anvil -->
<path d="M1259.300 681.700V687L1304 711Q1307.500 713 1311 711L1364 677Q1367.100 675 1367.100 670.400Z" fill="#b97908"/>
<path d="M1259.300 681.700L1320.900 644.300L1364 666.500Q1369 669.500 1364.500 672.500L1311.500 704.500Q1307.500 707 1303.500 705Z" fill="#a9a9ab"/>
<path d="M1307.500 706.500V712.500" fill="none"/>
<path d="M1305 712V720L1311 717V712Z" fill="#b97908"/>
<!-- fixed jaw top block -->
<path d="M1193.600 608L1240.800 634.800V646.800L1193.600 619Z"/>
<path d="M1186.400 604.700L1193.600 608V619L1186.400 614.900Z" fill="#6e6e70"/>
<path d="M1186.400 604.700L1272.600 552.700L1333.200 587.600L1240.800 634.800Z" fill="#a9a9ab"/>
<path d="M1186.400 604.700L1272.600 552.700L1277.800 556.400L1194.600 607.500Z" fill="#8b8b8d"/>
<path d="M1242.900 631.400L1326 583.500L1333.200 587.600L1240.800 634.800Z" fill="#858587"/>
<path d="M1240.800 634.800L1333.200 587.600V600.600L1248 648.800L1240.800 646.800Z" fill="url(#pKn)"/>
<path d="M1187 604.300L1272.600 552.700" fill="none" stroke="#2a2a2a" stroke-width="1.600" stroke-dasharray="1.600 1.800"/>
<!-- movable jaw: vertical body -->
<ellipse cx="1127" cy="601.500" rx="15" ry="13.500" fill="#ece4df" stroke-width=".9"/>
<path d="M1127 582L1147.500 580V660L1132 652Q1127 649 1127 643Z" fill="#cc860c"/>
<path d="M1147.500 581.800L1196.800 555V600.500L1155.600 621.900V660.300L1151 661Q1147.500 661 1147.500 657Z" fill="#a96d08"/>
<path d="M1132 590V652" fill="none" stroke-width=".8"/>
<!-- v jaw -->
<path d="M1164 578L1186.600 565.700V592.400L1173.200 600.600L1164 595.500Z" fill="#4a4a4c" stroke="#1c1c1c"/>
<path d="M1166 590L1186 579M1168 594L1186 584M1172 598L1186 589M1170 581L1180 575.500" fill="none" stroke="#7a7a7c" stroke-width=".8"/>
<!-- movable jaw: top bar -->
<ellipse cx="1139" cy="553" rx="8.500" ry="6" fill="#c07d0a"/>
<ellipse cx="1178" cy="531" rx="8.500" ry="6" fill="#c07d0a"/>
<path d="M1119.800 566.700L1203 515.400Q1206 514 1208.500 516L1218.400 522.600L1132.100 571.900Z" fill="#d08a0e"/>
<path d="M1127.500 566.500L1211 518" fill="none" stroke-width=".8"/>
<path d="M1119.800 566.700Q1113.500 570 1114.700 579Q1116.500 588 1124 590.300L1133.200 591.400V584.200L1132.100 571.900Z" fill="#d08a0e"/>
<path d="M1133.200 584.200L1139.300 586.200V591L1133.200 591.400Z" fill="#b97908"/>
<path d="M1132.100 571.900L1218.400 522.600L1224.500 525.700L1139.300 574.300Z" fill="#8b8b8d"/>
<path d="M1139.300 574.300L1224.500 525.700V540L1139.300 586.200Z" fill="url(#pKn)"/>
<path d="M1132.100 571.900L1139.300 574.300V586.200L1133.200 584.200Z" fill="#6e6e70"/>
<!-- handle -->
<path d="M1079.500 630.700L1120 606.800Q1125.500 609 1126.800 615V622L1086.400 645Z" fill="url(#gBar4)"/>
<path d="M1081.500 632.500L1121 609.500M1082.500 634.500L1122 611.500" fill="none" stroke-width=".6" stroke="#3a3330"/>
<path d="M1071.500 632.500L1079 629.500Q1084.500 630.500 1087 637.500Q1088.500 645 1085.500 648.500L1078 652.500Z" fill="#d9cec7"/>
<ellipse cx="1073.200" cy="642.700" rx="6.800" ry="9" transform="rotate(-22 1073.200 642.700)" fill="#e6ddd8" stroke-width="1.200"/>
</g>
<g fill="none" stroke="#c0c0c0" stroke-width=".9"><circle cx="1514.400" cy="521.600" r="33.600"/><circle cx="1514.400" cy="521.600" r="22.400"/><path d="M1480.800 521.600H1548M1514.400 488V551" stroke-width="1.100"/></g>
<circle cx="1523.500" cy="511.500" r="2.400" fill="#e8c3a4" stroke="#d9b090" stroke-width=".5"/>
</svg>
<div class="vlab" style="left:566px;top:72px;width:86px;border-radius:2px 0 0 2px"><span style="position:absolute;left:42.400px;top:0;transform:translateX(-50%)">Спереди-Сверху-Справа</span></div>
</div>
<div class="plus" style="left:259px;top:140px"></div>
<div class="plus" style="left:911px;top:140px"></div>
<div class="plus" style="left:259px;top:483px"></div>
<div class="plus" style="left:911px;top:483px"></div>
<!-- bottom tabs -->
<div class="a" style="left:283px;top:822px;width:45px;height:15px;background:#fff;border-right:1px solid #d9d9d9"></div>
<div class="a" style="left:328px;top:822px;width:22px;height:15px;background:#f0f0f0;border-right:1px solid #d9d9d9"></div>
<div class="t" style="left:287px;top:823px">Модель</div>
<div class="t" style="left:333px;top:823px">A3</div>
<svg style="left:255px;top:823px" width="13" height="13" viewBox="0 0 13 13"><rect x=".5" y=".5" width="12" height="12" fill="#f2f2f2" stroke="#b9b9b9"/><rect x="1" y="1" width="11" height="3" fill="#4f9be0"/><path d="M1 7.500h11M1 10h11" stroke="#c4c4c4"/></svg>
<!-- command line + status bar -->
<div class="a" style="left:4px;top:842px;width:63px;height:16px;background:#f3f3f3;border:1px solid #d4d4d4;border-bottom:none"></div>
<div class="t" style="left:8px;top:844px;color:#808080;font-size:9.3px">Команда:</div>
<div class="a" style="left:0;top:857px;width:1559px;height:20px;background:#f0f0f0"></div>
<div class="tg" style="left:192px;width:65px"></div>
<div class="tg" style="left:256px;width:79px"></div>
<div class="tg" style="left:334px;width:70px"></div>
<div class="tg" style="left:403px;width:67px"></div>
<div class="tg" style="left:605px;width:30px"></div>
<div class="tg" style="left:634px;width:69px"></div>
<div class="sb" style="left:2.500px">0.0000,187.0101,145.3482</div>
<div class="a" style="left:117px;top:863px;width:1px;height:8px;background:#b5b5b5"></div>
<div class="sb" style="left:126px">ШАГ</div>
<div class="sb" style="left:159px">СЕТКА</div>
<div class="sbc" style="left:192px;width:65px"><span>оПРИВЯЗКА</span></div>
<div class="sbc" style="left:256px;width:79px"><span>3D оПРИВЯЗКА</span></div>
<div class="sbc" style="left:334px;width:70px"><span>ОТС-ОБЪЕКТ</span></div>
<div class="sbc" style="left:403px;width:67px"><span>ОТС-ПОЛЯР</span></div>
<div class="sb" style="left:477px">ОРТО</div>
<div class="sb" style="left:515px">ДИН-ВВОД</div>
<div class="sb" style="left:577px">ИЗО</div>
<div class="a" style="left:602px;top:863px;width:1px;height:8px;background:#b5b5b5"></div>
<div class="sbc" style="left:605px;width:30px"><span>ВЕС</span></div>
<div class="sbc" style="left:634px;width:69px"><span>ШТРИХОВКА</span></div>
<div class="sb" style="left:710px">ПАРАМ-РЕЖИМ</div>
<div class="a" style="left:785px;top:863px;width:1px;height:8px;background:#b5b5b5"></div>
<div class="sb" style="left:1031px">МОДЕЛЬ</div>
<div class="sb" style="left:1311px">М1:1</div>
<svg style="left:1060px;top:857px" width="500" height="20" viewBox="1060 857 500 20">
<!-- model icons -->
<rect x="1076.500" y="861.500" width="8" height="5.500" rx="1" fill="#e6e6e6" stroke="#6d6d6d" stroke-width=".9"/><rect x="1072.500" y="865.500" width="9" height="7.500" rx="1" fill="#e6e6e6" stroke="#6d6d6d" stroke-width=".9"/><rect x="1078" y="864" width="5" height="4" rx=".8" fill="#d9d9d9" stroke="#6d6d6d" stroke-width=".7"/><path d="M1074.500 869h5" stroke="#6d6d6d" stroke-width=".8"/>
<path d="M1090.500 862.500h9.500v8.500h-9.500z" fill="#f4f4f4" stroke="#8a8a8a" stroke-width=".9"/><path d="M1091 871h9.500v-8" stroke="#b5b5b5" stroke-width="1" fill="none"/><path d="M1096 871.500h4.500l-2.200 2.300z" fill="#222"/>
<path d="M1170.800 865.500h7.200l-3.600 4z" fill="#333"/>
<rect x="1181.200" y="861.800" width="11.500" height="11" fill="#cfe9fb" stroke="#2a8fd6" stroke-width="1" stroke-dasharray="2 1.200"/><ellipse cx="1185.500" cy="867" rx="2" ry="3.200" fill="none" stroke="#2a8fd6" stroke-width=".9"/><path d="M1188 865v7.500l2-1.800 1.300 2.700 1.200-.6-1.300-2.600h2.500z" fill="#fff" stroke="#333" stroke-width=".7"/>
<path d="M1204.900 861.500a4.300 4.300 0 0 1 4.300 4.300q0 2-1.800 3.700v1.800h-5v-1.800q-1.800-1.700-1.800-3.700a4.300 4.300 0 0 1 4.300-4.300z" fill="#d6d6d6" stroke="#9a9a9a" stroke-width=".8"/><path d="M1203 872.500h3.800M1203.500 874h2.800" stroke="#8a8a8a" stroke-width=".9"/>
<circle cx="1228.800" cy="867.200" r="6" fill="#fbeaea" stroke="#e02020" stroke-width="1.300"/><path d="M1227 863v8l2-1.800 1.200 2.500 1.100-.5-1.200-2.500h2.400z" fill="#f4caca" stroke="#b03030" stroke-width=".6"/><path d="M1224.500 863l8.600 8.400" stroke="#e02020" stroke-width="1.300"/>
<path d="M1247 861.500v8l2-1.800 1.300 2.600 1.200-.6-1.300-2.600h2.600z" fill="#fff" stroke="#333" stroke-width=".8"/><rect x="1251.500" y="867.500" width="6" height="5.500" fill="#e8e8e8" stroke="#555" stroke-width=".9"/><rect x="1253" y="869.500" width="3" height="2" fill="#9a9a9a"/>
<rect x="1262.400" y="858" width="23.300" height="19" fill="#cde2f6"/>
<path d="M1271.500 861.500v11.500h11" fill="none" stroke="#222" stroke-width="1.200"/><path d="M1270 863.500l1.500-2.500 1.500 2.500zM1281 871.500l2.500 1.500-2.500 1.500z" fill="#222"/><path d="M1279 861l-2.800 4.800h2l-1.500 4.200 4-5.500h-2l1.800-3.500z" fill="#222"/>
<!-- zoom tools -->
<path d="M1367.500 868.500l-1.200-2.200q-.6-1.300.7-1.400l1.500 1.500v-3.800q.9-1 1.700 0v-1q.9-1 1.800 0v.6q1-.9 1.800.1v1q1-.8 1.700.3v4.400q0 2.500-1.500 4.300h-5.500z" fill="#f4f4f4" stroke="#4a4a4a" stroke-width=".8" stroke-linejoin="round"/><path d="M1370.200 863v3M1372 862.500v3.500M1373.800 863.500v2.800" stroke="#4a4a4a" stroke-width=".6"/>
<path d="M1398.500 869.500l3.500 3.800" stroke="#2a6fd0" stroke-width="1.700" stroke-linecap="round"/><circle cx="1395" cy="865.800" r="4.700" fill="#f1f8fd" stroke="#3d4d60" stroke-width="1.200"/>
<rect x="1413.300" y="860.800" width="12.500" height="12.500" fill="#6ec0ef"/><path d="M1421 869l3.300 3.500" stroke="#1d2f45" stroke-width="1.500" stroke-linecap="round"/><circle cx="1418.800" cy="866.300" r="3.500" fill="#a6daf6" stroke="#1d2f45" stroke-width="1.100"/>
<path d="M1436.500 870.500v-9h10v4" fill="none" stroke="#2a8fd6" stroke-width="1.100"/><path d="M1436 861.500h11" stroke="#2a8fd6" stroke-width="1.800"/><path d="M1446 870l3 3.300" stroke="#444" stroke-width="1.400" stroke-linecap="round"/><circle cx="1444" cy="868" r="3" fill="#eef6fc" stroke="#444" stroke-width="1"/>
<ellipse cx="1466.700" cy="867.800" rx="6.300" ry="3.400" fill="none" stroke="#7a7a7a" stroke-width="1.100"/><path d="M1466.700 860.500v13.500" stroke="#7a7a7a" stroke-width="1.100"/><path d="M1471 870.500l2-.3-.8 2z" fill="#333"/>
<path d="M1486 866a4.300 4.300 0 0 1 7.500-2M1494 868.500a4.300 4.300 0 0 1-7.500 2" fill="none" stroke="#3fae49" stroke-width="1.600"/><path d="M1492 862l3.200 2.500-3.800 1.300zM1488 872.500l-3.200-2.500 3.800-1.300z" fill="#3fae49"/>
<rect x="1502.200" y="862" width="8.500" height="6.500" fill="#f1f1f1" stroke="#6a6a6a" stroke-width=".9"/><rect x="1506" y="867.500" width="8" height="5.500" rx="1" fill="#d5d5d5" stroke="#555" stroke-width=".9"/><path d="M1508 867.500v-1.500q2-2 4 0v1.500" fill="none" stroke="#555" stroke-width=".9"/><rect x="1509" y="869.500" width="2" height="1.500" fill="#555"/>
<path d="M1521 861.500h6" stroke="#c8c8c8" stroke-width="1" stroke-dasharray="2 1"/><path d="M1533 866v6" stroke="#c8c8c8" stroke-width="1" stroke-dasharray="2 1"/><path d="M1528.500 864.500l4.300-3.800M1530 860.500h3v3" fill="none" stroke="#f0a878" stroke-width="1"/><rect x="1520.500" y="864.500" width="9.500" height="9" fill="#f1f1f1" stroke="#b5b5b5" stroke-width=".8"/><rect x="1520.500" y="864.500" width="9.500" height="2.600" fill="#4f9be0"/>
<rect x="1545" y="863.500" width="8.500" height="7.500" fill="#2a9be3" stroke="#1d5f95" stroke-width=".8"/><path d="M1543 864.500v-2.500h2.500M1553 862h2.500v2.500M1555.500 870v2.500h-2.500M1545.500 872.500h-2.500v-2.500" fill="none" stroke="#333" stroke-width="1.100"/>
</svg>

</body>
</html>
